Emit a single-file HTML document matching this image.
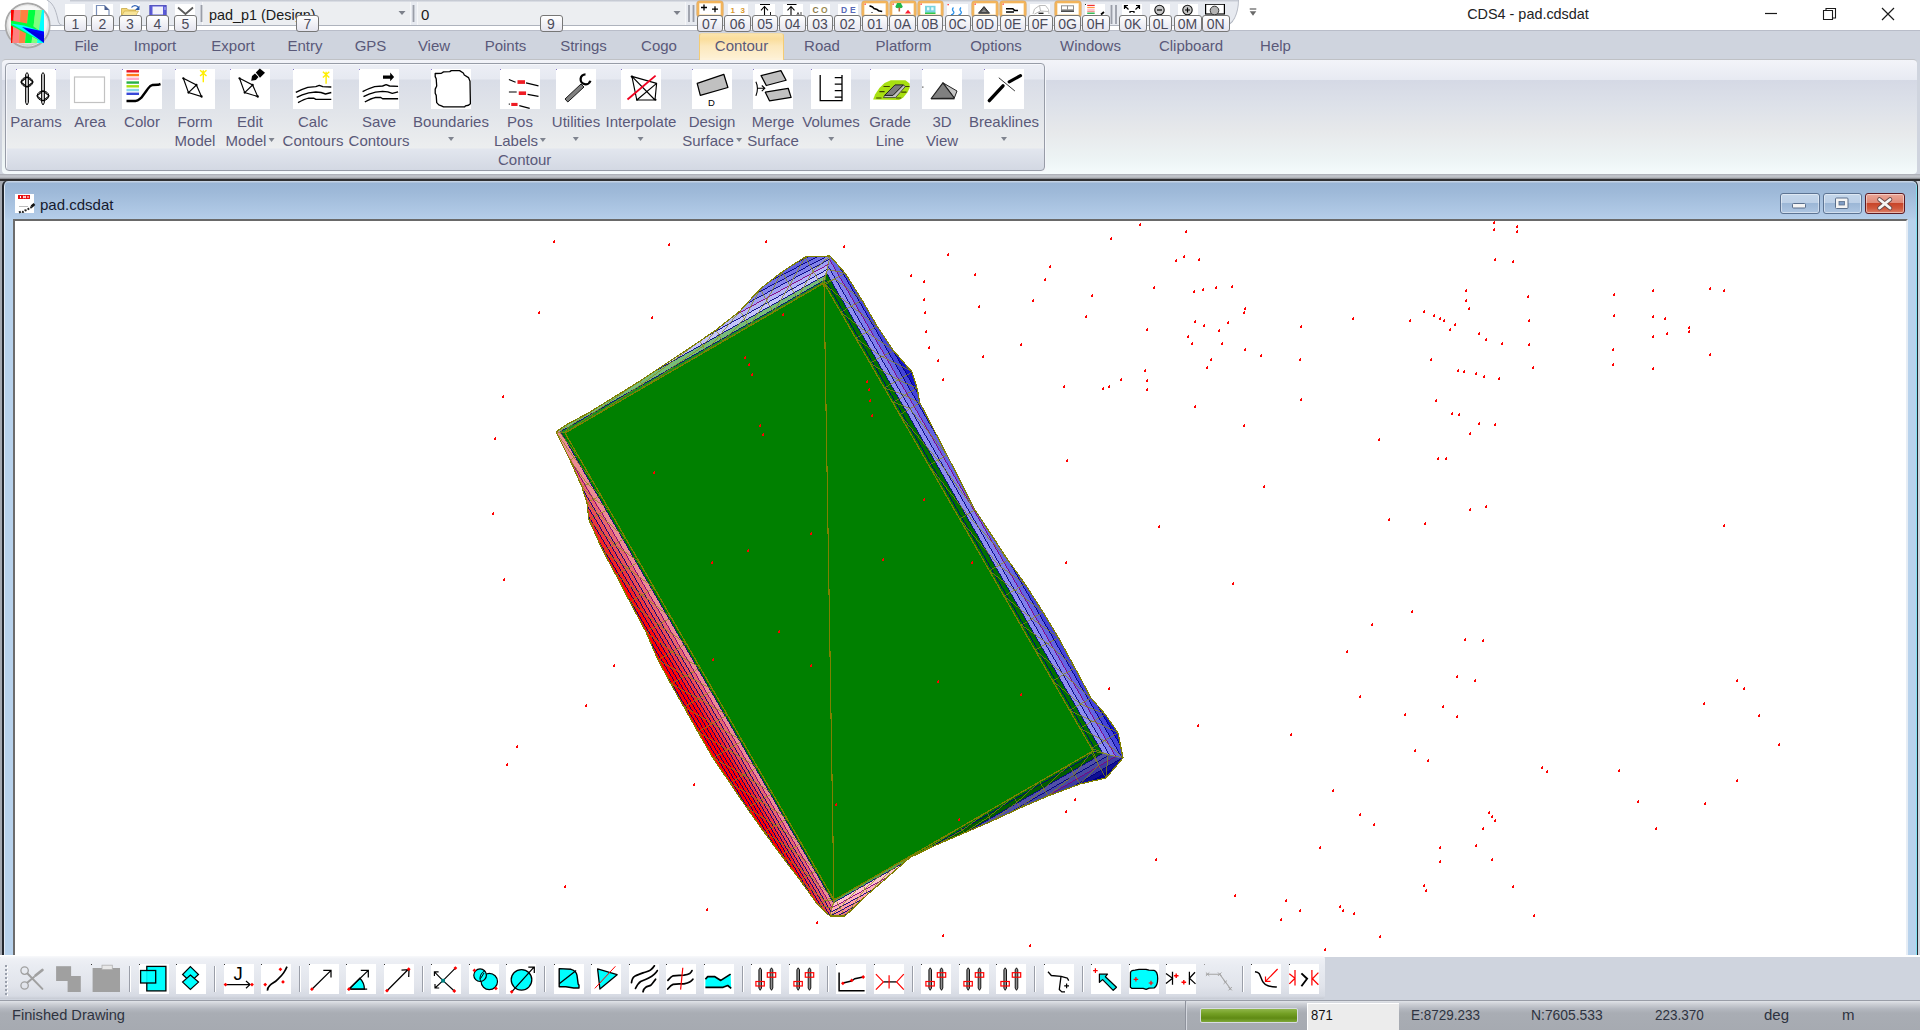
<!DOCTYPE html>
<html><head><meta charset="utf-8"><title>CDS4 - pad.cdsdat</title>
<style>
html,body{margin:0;padding:0}
body{width:1920px;height:1030px;position:relative;overflow:hidden;background:#cfd4de;font-family:"Liberation Sans",sans-serif;font-size:15px;color:#5a5979}
.abs{position:absolute}
svg{position:absolute;overflow:visible}
/* title / qat */
#titlebg{left:0;top:0;width:1920px;height:30px;background:#fff}
#qat{left:48px;top:0;width:1190px;height:25px;background:linear-gradient(#c4c8d2 0,#c9cdd6 1.200px,#e7eaf0 1.800px);border-bottom:1px solid #aeb3bd;border-right:1px solid #b8bcc6;border-radius:0 0 14px 0/0 0 26px 0;}
#tabrow{left:0;top:30px;width:1920px;height:29px;background:linear-gradient(#b9bdc9 0,#b9bdc9 1px,#cfd4de 1.500px)}
.tab{position:absolute;top:36px;height:20px;line-height:20px;font-size:15px;color:#5a5979;white-space:nowrap;transform:translateX(-50%)}
.kt{position:absolute;top:15px;height:15px;line-height:16px;border:1px solid #767676;border-radius:3px;background:linear-gradient(#ffffff,#e4e4ee);color:#4a4a5a;font-size:14px;text-align:center;box-sizing:content-box}
.combo{position:absolute;top:1.500px;height:23.500px;background:#eceef1;line-height:25px;font-size:15px;color:#1a1a1a;white-space:nowrap;overflow:hidden;box-shadow:-1px 0 0 #f6f7f9,1px 0 0 #f6f7f9}
.qi{position:absolute;top:4px;width:22px;height:12px;background:#fff;overflow:hidden}
.qi.on{top:1px;height:15px;background:#fff;box-shadow:0 0 0 2px #f0b060, 0 0 0 3px #c89048;border-radius:2px}
#wtitle{left:1458px;top:3px;width:140px;text-align:center;transform:scaleX(.96);font-size:15px;line-height:22px;color:#222;white-space:nowrap}
/* ribbon */
#ribbon{left:2px;top:58.600px;width:1915px;height:115px;border-radius:4px;box-sizing:border-box;border-top:1px solid #bfc1c5;background:linear-gradient(#f3f4f9 0px,#e7eaf2 20px,#d5d9e5 20px,#dde1e9 45px,#e7e9eb 72px,#edf4f5 100px,#f5fbfc 114px)}
#group{left:5px;top:63px;width:1040px;height:108px;border:1px solid #979ca7;border-radius:4px;box-sizing:border-box;background:linear-gradient(#eceef5 0px,#e6e9f1 15px,#d9dde7 16px,#e2e5ea 50px,#eceeef 84px,#e2e6ee 85px,#d3d8e3 106px);box-shadow:1px 1px 0 #f4f6fa, inset 1px 1px 0 #f6f7fb}
.rb{position:absolute;top:69px;width:40px;height:40px;background:#fff}
.rl{position:absolute;top:112px;line-height:19px;font-size:15px;color:#5a5979;text-align:center;white-space:nowrap;transform:translateX(-50%)}
.dd{position:relative;top:-2px;display:inline-block;width:0;height:0;border:3.5px solid transparent;border-top:4px solid #7f848f;border-bottom:0;vertical-align:middle;margin-left:2px}
#gcap{left:498px;top:150px;line-height:20px;font-size:15px;color:#5a5979}
#rsep1{left:0;top:173.500px;width:1920px;height:5.800px;background:linear-gradient(#a9abb3 0,#c4c7cd 40%,#bcbfc5 65%,#7c7e82 100%)}
#rsep2{left:0;top:179.200px;width:1920px;height:2px;background:#2f2f31}
#mdibg{left:0;top:181.200px;width:1917px;height:773.800px;background:#a4a8b0}
/* mdi */
#mdiframe{left:2px;top:180.200px;width:1915.500px;height:774.800px;border-bottom:none !important;box-sizing:border-box;border:1px solid #2f2f31;border-left:2px solid #23272e;border-right:1.500px solid #23272e;border-radius:6px 6px 0 0;box-shadow:inset 0 1.500px 0 #c4d2e4,inset 1px 0 0 #dfe9f5,inset -1px 0 0 #7fe0f0;background:linear-gradient(#99b4d4 0px,#9fbad9 12px,#b3cce8 36px,#b8d2ec 40px)}
#mdicontent{left:13px;top:219px;width:1894.500px;height:736px;background:#fff;border-left:2px solid #6c6c6c;border-top:2.200px solid #696969;border-right:2.500px solid #e6edf5;border-bottom:none;box-sizing:border-box}
#mditext{left:40px;top:195px;line-height:20px;font-size:15px;color:#15192e;white-space:nowrap}
.mb{position:absolute;top:193px;height:21px;box-sizing:border-box;border:1px solid #5d7493;border-radius:3px;background:linear-gradient(#c4d6ea 0,#bdd0e7 45%,#9cb7d6 50%,#aec6e2 100%);box-shadow:inset 0 0 0 1px rgba(255,255,255,.45)}
/* toolbar */
#tbbg{left:0;top:955px;width:1920px;height:45px;background:linear-gradient(#fff 0,#fff 2px,#cfd4de 2.500px)}
#tb{left:0;top:955.500px;width:1325px;height:43.500px;border-radius:3px 3px 3px 0;background:linear-gradient(#f8f9fb 0,#eef0f5 3px,#e9ecf2 10px,#e1e4eb 30px,#d6dae3 40px,#c4c8d1 43.500px)}
.ti{position:absolute;top:964px;width:30px;height:30px;background:#fff}
.tsep{position:absolute;top:966px;width:1px;height:26px;background:#9a9ea8;box-shadow:1px 0 0 #fff}
/* status */
#status{left:0;top:1000px;width:1920px;height:30px;background:linear-gradient(#9a9ea8 0,#9a9ea8 1px,#e0e3e8 1px,#cdd0d6 4px,#b3b7bf 9px,#a9adb4 13px,#a6aab1 30px)}
.st{position:absolute;top:1005px;line-height:20px;font-size:15px;color:#2e3340;white-space:nowrap;transform-origin:0 50%}
.nm{transform:scaleX(.9)}

</style></head>
<body>
<div class="abs" id="titlebg"></div>
<div class="abs" id="tabrow"></div>
<div class="abs" id="qat"></div>
<svg style="left:40px;top:0" width="30" height="30" viewBox="40 0 30 30"><path d="M46 0 C55 3 56 14 58 22 Q59 25.5 63 25.5 L70 25.5 L70 0Z" fill="#e7eaf0"/><path d="M47 0 C55 4 56.5 14 58.5 22 Q59.5 25.5 63 25.5 L70 25.5" fill="none" stroke="#b4b8c2" stroke-width="1"/></svg>
<div class="combo" style="left:203px;width:207px;padding-left:6px;box-sizing:border-box"><span style="display:inline-block;transform:scaleX(.96);transform-origin:0 50%">pad_p1 (Design)</span></div>
<div class="combo" style="left:418px;width:267px;padding-left:3px;box-sizing:border-box">0</div>
<svg style="left:0;top:0" width="1300" height="30"><path d="M398.500 11h7l-3.500 4zM673.500 11h7l-3.500 4z" fill="#7c808a"/><path d="M201.500 5v17M413.500 5v17M689 5v17M693.500 5v17M1111.500 5v19M1116 5v19" stroke="#9a9ea8" stroke-width="1.800"/><path d="M1249.700 9h6.600" stroke="#6a6a6a" stroke-width="1.300"/><path d="M1249.700 11.300h6.600l-3.300 4.500z" fill="#6a6a6a"/></svg>
<div class="abs" style="left:65px;top:4px;width:20px;height:12px;background:#fff;overflow:hidden"><svg width="20" height="12" viewBox="65 4 20 12" style="left:0;top:0"></svg></div>
<div class="abs" style="left:93px;top:4px;width:19.5px;height:12px;background:#fff;overflow:hidden"><svg width="19.5" height="12" viewBox="93 4 19.5 12" style="left:0;top:0"><path d="M96.500 16V5.500h8l4.500 4.500v6" fill="#fff" stroke="#7a8fb8" stroke-width="1.200"/><path d="M104.500 5.500v4.500h4.500z" fill="#4a5f90"/></svg></div>
<div class="abs" style="left:120px;top:4px;width:20px;height:12px;background:#fff;overflow:hidden"><svg width="20" height="12" viewBox="120 4 20 12" style="left:0;top:0"><path d="M121.500 16V8.500h5.500l1.500 1.500h7V16z" fill="#f4d878" stroke="#c8a848" stroke-width=".8"/><path d="M121.500 16l3-5h14l-3 5z" fill="#f8e498" stroke="#c8a848" stroke-width=".6"/><path d="M131.500 7.500c1.500-2.500 5-2.500 6.500-.5" fill="none" stroke="#3868b8" stroke-width="1.300"/><path d="M139.500 5.500v4.500h-4.500z" fill="#2858a8"/></svg></div>
<div class="abs" style="left:148.5px;top:4px;width:18px;height:12px;background:#fff;overflow:hidden"><svg width="18" height="12" viewBox="148.5 4 18 12" style="left:0;top:0"><rect x="149.300" y="5.300" width="16.400" height="12" fill="#5a5ad8" stroke="#4040b0" stroke-width=".8"/><rect x="152" y="6.500" width="10.500" height="8" fill="#f0f0fa"/><rect x="164" y="7" width="1" height="3" fill="#c0c0f0"/></svg></div>
<div class="abs" style="left:175px;top:4px;width:20px;height:12px;background:#fff;overflow:hidden"><svg width="20" height="12" viewBox="175 4 20 12" style="left:0;top:0"><path d="M178 7.500l7.500 6.500 7.500-6.500" fill="none" stroke="#5a5a5a" stroke-width="1.800"/></svg></div>
<div class="abs" style="left:697px;top:1px;width:26px;height:16px;box-sizing:border-box;border:2.500px solid #f2b45c;border-radius:3px;background:#fff;box-shadow:0 0 0 .6px #d8a868, inset 0 0 0 .8px #fbe2b8;overflow:hidden"><svg width="21" height="14" viewBox="699.5 3.500 21 14" style="left:0;top:0"><path d="M701.500 8h6M704.500 5v6M712.500 9.700h6M715.500 6.700v6" stroke="#000" stroke-width="1.300"/></svg></div>
<div class="abs" style="left:727.5px;top:4px;width:20px;height:12px;background:#fff;overflow:hidden"><svg width="20" height="12" viewBox="727.5 4 20 12" style="left:0;top:0"><text x="730" y="13" font-size="8" fill="#d8982c" font-family="Liberation Sans,sans-serif" font-weight="bold">1</text><text x="740" y="13" font-size="8" fill="#d8982c" font-family="Liberation Sans,sans-serif" font-weight="bold">3</text></svg></div>
<div class="abs" style="left:755px;top:4px;width:20px;height:12px;background:#fff;overflow:hidden"><svg width="20" height="12" viewBox="755 4 20 12" style="left:0;top:0"><path d="M760 4.500h10M764.500 6.500v10M761 10.300l3.500-3.800 3.500 3.800" fill="none" stroke="#000" stroke-width="1.100"/><path d="M770.500 12v4" stroke="#000" stroke-width=".9"/></svg></div>
<div class="abs" style="left:782.5px;top:4px;width:20px;height:12px;background:#fff;overflow:hidden"><svg width="20" height="12" viewBox="782.5 4 20 12" style="left:0;top:0"><path d="M786.500 4.500h9.500M790.500 6.500v10M787 10.300l3.500-3.800 3.500 3.800" fill="none" stroke="#000" stroke-width="1.100"/><path d="M796 16l1.500-3.500 1.500 3.500M800.500 12v4" stroke="#000" stroke-width=".7" fill="none"/></svg></div>
<div class="abs" style="left:810px;top:4px;width:20px;height:12px;background:#fff;overflow:hidden"><svg width="20" height="12" viewBox="810 4 20 12" style="left:0;top:0"><text x="812.500" y="13" font-size="8.500" fill="#8a7a48" font-family="Liberation Sans,sans-serif" font-weight="bold">C</text><text x="821" y="13" font-size="8.500" fill="#9a8a50" font-family="Liberation Sans,sans-serif" font-weight="bold">O</text></svg></div>
<div class="abs" style="left:837.5px;top:4px;width:20px;height:12px;background:#fff;overflow:hidden"><svg width="20" height="12" viewBox="837.5 4 20 12" style="left:0;top:0"><text x="840.500" y="13" font-size="8.500" fill="#5868b8" font-family="Liberation Sans,sans-serif" font-weight="bold">D</text><text x="849.500" y="13" font-size="8.500" fill="#5868b8" font-family="Liberation Sans,sans-serif" font-weight="bold">E</text></svg></div>
<div class="abs" style="left:862px;top:1px;width:26px;height:16px;box-sizing:border-box;border:2.500px solid #f2b45c;border-radius:3px;background:#fff;box-shadow:0 0 0 .6px #d8a868, inset 0 0 0 .8px #fbe2b8;overflow:hidden"><svg width="21" height="14" viewBox="864.5 3.500 21 14" style="left:0;top:0"><rect x="865" y="4" width="1.300" height="1.300" fill="#ff2020"/><path d="M870 6.300l3 1.200 1.500 1.500 3 1 1.500 1.200 3.700.8" fill="none" stroke="#000" stroke-width="1.500"/><rect x="872" y="12.500" width="1" height="1" fill="#000"/></svg></div>
<div class="abs" style="left:890px;top:1px;width:25.5px;height:16px;box-sizing:border-box;border:2.500px solid #f2b45c;border-radius:3px;background:#fff;box-shadow:0 0 0 .6px #d8a868, inset 0 0 0 .8px #fbe2b8;overflow:hidden"><svg width="20.5" height="14" viewBox="892.5 3.500 20.5 14" style="left:0;top:0"><rect x="893" y="4" width="1.300" height="1.300" fill="#ff2020"/><circle cx="899.500" cy="5.700" r="2.700" fill="#20b848"/><circle cx="897.800" cy="7" r="1.800" fill="#20b848"/><circle cx="901.300" cy="7" r="1.800" fill="#20b848"/><rect x="899" y="8" width="1.600" height="4" fill="#b86838"/><path d="M905.500 14l3-3.800 3 3.800z" fill="#ff2030"/></svg></div>
<div class="abs" style="left:917.5px;top:1px;width:25.5px;height:16px;box-sizing:border-box;border:2.500px solid #f2b45c;border-radius:3px;background:#fff;box-shadow:0 0 0 .6px #d8a868, inset 0 0 0 .8px #fbe2b8;overflow:hidden"><svg width="20.5" height="14" viewBox="920 3.500 20.5 14" style="left:0;top:0"><rect x="920.5" y="4" width="1.300" height="1.300" fill="#ff2020"/><rect x="925" y="6.300" width="10.500" height="7" fill="#78d4e0"/><rect x="927" y="7.800" width="2.400" height="3" fill="#e8fafc"/><rect x="931.200" y="7.800" width="2.400" height="3" fill="#e8fafc"/><rect x="925" y="13" width="10.500" height="1.500" fill="#30c848"/></svg></div>
<div class="abs" style="left:947px;top:4px;width:20.5px;height:12px;background:#fff;overflow:hidden"><svg width="20.5" height="12" viewBox="947 4 20.5 12" style="left:0;top:0"><rect x="947.5" y="4" width="1.300" height="1.300" fill="#ff2020"/><path d="M953.500 7.500c-1.500 1.500-1 3 0 4s0 3-2.500 3.500M961 7.500c-1.500 1.500-1 3 0 4s0 3-2.500 3.500" fill="none" stroke="#2c90e8" stroke-width="1.300"/></svg></div>
<div class="abs" style="left:972px;top:1px;width:26px;height:16px;box-sizing:border-box;border:2.500px solid #f2b45c;border-radius:3px;background:#fff;box-shadow:0 0 0 .6px #d8a868, inset 0 0 0 .8px #fbe2b8;overflow:hidden"><svg width="21" height="14" viewBox="974.5 3.500 21 14" style="left:0;top:0"><rect x="975" y="4" width="1.300" height="1.300" fill="#ff2020"/><path d="M979 13.700l5.500-6.600 5.500 6.600z" fill="#585858" stroke="#2a2a2a" stroke-width="1"/><path d="M982 12.500l2.500-3 2.500 3z" fill="#8a8a8a"/></svg></div>
<div class="abs" style="left:1000px;top:1px;width:25.5px;height:16px;box-sizing:border-box;border:2.500px solid #f2b45c;border-radius:3px;background:#fff;box-shadow:0 0 0 .6px #d8a868, inset 0 0 0 .8px #fbe2b8;overflow:hidden"><svg width="20.5" height="14" viewBox="1002.5 3.500 20.5 14" style="left:0;top:0"><rect x="1003" y="4" width="1.300" height="1.300" fill="#ff2020"/><path d="M1006.500 9.200h6.800l1.700 1.700h3.500M1006.500 12.600h8" fill="none" stroke="#000" stroke-width="1.500"/></svg></div>
<div class="abs" style="left:1030px;top:4px;width:20px;height:12px;background:#fff;overflow:hidden"><svg width="20" height="12" viewBox="1030 4 20 12" style="left:0;top:0"><path d="M1033 14l1.500-5 5-3.500h6l3 4 .5 4.500M1039.500 5.500l1 5.500-6 3M1040.500 11l8 .5" fill="none" stroke="#bcbcbc" stroke-width="1"/><rect x="1038.500" y="12.600" width="5" height="1.400" fill="#222"/></svg></div>
<div class="abs" style="left:1054.5px;top:1px;width:26px;height:16px;box-sizing:border-box;border:2.500px solid #f2b45c;border-radius:3px;background:#fff;box-shadow:0 0 0 .6px #d8a868, inset 0 0 0 .8px #fbe2b8;overflow:hidden"><svg width="21" height="14" viewBox="1057 3.500 21 14" style="left:0;top:0"><rect x="1061.500" y="6.300" width="12" height="4" fill="#fff" stroke="#8e8e8e" stroke-width="1"/><path d="M1067.500 6.300v4" stroke="#8e8e8e" stroke-width="1"/><path d="M1061 11.600h13" stroke="#111" stroke-width="1.400"/></svg></div>
<div class="abs" style="left:1085px;top:4px;width:20px;height:12px;background:#fff;overflow:hidden"><svg width="20" height="12" viewBox="1085 4 20 12" style="left:0;top:0"><rect x="1085" y="4" width="1" height="1" fill="#222"/><rect x="1087.200" y="4.800" width="7.500" height="1.300" fill="#f03030"/><rect x="1087.200" y="7" width="7.500" height="1.200" fill="#ff9848"/><rect x="1087.200" y="9.200" width="7.500" height="1.100" fill="#ffb0c8"/><rect x="1087.200" y="10.800" width="7.500" height=".8" fill="#f05050"/><rect x="1087.200" y="12.500" width="7.500" height="1.500" fill="#38b858"/><path d="M1101 14.500l3-2.500" stroke="#000" stroke-width="1.800"/></svg></div>
<div class="abs" style="left:1122px;top:4px;width:20px;height:12px;background:#fff;overflow:hidden"><svg width="20" height="12" viewBox="1122 4 20 12" style="left:0;top:0"><path d="M1124.500 9v-3.500h3.500M1124.500 5.500l4 4M1139.500 9v-3.500h-3.500M1139.500 5.500l-4 4M1130 13v-1.500h4V13" fill="none" stroke="#000" stroke-width="1.200"/></svg></div>
<div class="abs" style="left:1150px;top:4px;width:20px;height:12px;background:#fff;overflow:hidden"><svg width="20" height="12" viewBox="1150 4 20 12" style="left:0;top:0"><circle cx="1159.500" cy="10" r="4.700" fill="#c8c8c8" stroke="#111" stroke-width="1.100"/><path d="M1157 10h5" stroke="#000" stroke-width="1.200"/></svg></div>
<div class="abs" style="left:1177.5px;top:4px;width:20.5px;height:12px;background:#fff;overflow:hidden"><svg width="20.5" height="12" viewBox="1177.5 4 20.5 12" style="left:0;top:0"><circle cx="1187" cy="10" r="4.700" fill="#c8c8c8" stroke="#111" stroke-width="1.100"/><path d="M1184.500 10h5M1187 7.500v5" stroke="#000" stroke-width="1.200"/></svg></div>
<div class="abs" style="left:1205px;top:4px;width:20px;height:12px;background:#fff;overflow:hidden"><svg width="20" height="12" viewBox="1205 4 20 12" style="left:0;top:0"><rect x="1205.600" y="4.200" width="18.800" height="9.800" fill="#fff" stroke="#000" stroke-width="1.200"/><circle cx="1214.500" cy="10.500" r="4.300" fill="#b4b4b4" stroke="#333" stroke-width="1"/></svg></div>
<div class="kt" style="left:64px;width:21px">1</div>
<div class="kt" style="left:91px;width:21px">2</div>
<div class="kt" style="left:118.5px;width:21px">3</div>
<div class="kt" style="left:146px;width:21px">4</div>
<div class="kt" style="left:174px;width:21px">5</div>
<div class="kt" style="left:296px;width:21px">7</div>
<div class="kt" style="left:539.5px;width:21px">9</div>
<div class="kt" style="left:696.5px;width:24.5px">07</div>
<div class="kt" style="left:724.2px;width:24.5px">06</div>
<div class="kt" style="left:751.7px;width:24.5px">05</div>
<div class="kt" style="left:779.2px;width:24.5px">04</div>
<div class="kt" style="left:806.7px;width:24.5px">03</div>
<div class="kt" style="left:834.2px;width:24.5px">02</div>
<div class="kt" style="left:861.7px;width:24.5px">01</div>
<div class="kt" style="left:889.2px;width:24.5px">0A</div>
<div class="kt" style="left:916.7px;width:24.5px">0B</div>
<div class="kt" style="left:944.5px;width:24.5px">0C</div>
<div class="kt" style="left:971.8px;width:24.5px">0D</div>
<div class="kt" style="left:999.5px;width:24.5px">0E</div>
<div class="kt" style="left:1027.5px;width:23px">0F</div>
<div class="kt" style="left:1054px;width:25px">0G</div>
<div class="kt" style="left:1082px;width:25.5px">0H</div>
<div class="kt" style="left:1119px;width:25.5px">0K</div>
<div class="kt" style="left:1149px;width:21px">0L</div>
<div class="kt" style="left:1173.5px;width:26px">0M</div>
<div class="kt" style="left:1202px;width:25.5px">0N</div>
<div class="abs" style="left:699px;top:33px;width:85px;height:26px;box-sizing:border-box;border:1px solid #f4cc74;border-top-color:#f3dca6;border-bottom:none;border-radius:3px 3px 0 0;background:linear-gradient(#fbe4ac 0,#fadd9b 5px,#fce8bc 12px,#fef2d8 26px)"></div>
<div class="tab" style="left:86.5px">File</div>
<div class="tab" style="left:155px">Import</div>
<div class="tab" style="left:233px">Export</div>
<div class="tab" style="left:305px">Entry</div>
<div class="tab" style="left:370.5px">GPS</div>
<div class="tab" style="left:434px">View</div>
<div class="tab" style="left:505.5px">Points</div>
<div class="tab" style="left:583.5px">Strings</div>
<div class="tab" style="left:659px">Cogo</div>
<div class="tab" style="left:741.5px">Contour</div>
<div class="tab" style="left:822px">Road</div>
<div class="tab" style="left:903.5px">Platform</div>
<div class="tab" style="left:996px">Options</div>
<div class="tab" style="left:1090.5px">Windows</div>
<div class="tab" style="left:1191px">Clipboard</div>
<div class="tab" style="left:1275.5px">Help</div>
<svg style="left:0;top:0" width="60" height="60" viewBox="0 0 60 60">
<defs><radialGradient id="og" cx="50%" cy="45%" r="55%"><stop offset="0" stop-color="#fff"/><stop offset=".78" stop-color="#f4f4f4"/><stop offset=".9" stop-color="#c9c9c9"/><stop offset="1" stop-color="#9a9a9a"/></radialGradient>
<clipPath id="oc"><rect x="11" y="10" width="33" height="33"/></clipPath></defs>
<circle cx="27.700" cy="25.500" r="22" fill="url(#og)" stroke="#a9a9a9" stroke-width="1.800"/><circle cx="27.700" cy="25.500" r="20.600" fill="none" stroke="#e4e4e4" stroke-width="1"/>
<g clip-path="url(#oc)">
<rect x="11" y="10" width="33" height="33" fill="#80ff80"/>
<path d="M11 10h3l-1.5 33H11z" fill="#ff0000"/>
<path d="M14 10h6.5l-1.5 33h-6.5z" fill="#ff8080"/>
<path d="M20.5 10h8l-3.5 33h-6z" fill="#ff8040"/>
<path d="M28.5 10h7l-4 33h-6.5z" fill="#00ff40"/>
<path d="M35.500 10H42L37 43h-5.500z" fill="#80ff80"/>
<path d="M42 10h2v33h-7z" fill="#00ffff"/>
<path d="M11 20.500L30 24 44 34v9L11 25.500z" fill="#00ff40"/>
<path d="M11 23.500L44 43V32L24 25.500z" fill="#00ffff"/>
<path d="M22 27L44 31.500V43z" fill="#0000ff"/>
<path d="M25 29L44 35V42z" fill="#0000e0"/>
</g></svg>
<div class="abs" id="wtitle">CDS4 - pad.cdsdat</div>
<svg style="left:1750px;top:0" width="170" height="30" viewBox="1750 0 170 30"><path d="M1765 13.5h12" stroke="#1a1a1a" stroke-width="1.2" fill="none"/><path d="M1823.500 10.500h9v9h-9zM1826 10.500v-2h9.500v9.500h-3" stroke="#1a1a1a" stroke-width="1.1" fill="none"/><path d="M1882 8l12 12M1894 8l-12 12" stroke="#1a1a1a" stroke-width="1.2" fill="none"/></svg>
<div class="abs" id="ribbon"></div>
<div class="abs" style="left:699px;top:58px;width:85px;height:1.800px;background:#fef2d8;border-left:1px solid #f4cc74;border-right:1px solid #f4cc74;box-sizing:border-box"></div>
<div class="abs" id="group"></div>
<div class="rb" style="left:16px"><svg width="40" height="40" viewBox="0 0 40 40" style="left:0;top:0"><rect x="0" y="0" width="1" height="1" fill="#8878c8"/><rect x="39" y="0" width="1" height="1" fill="#8878c8"/><path d="M9.5 5.500l1.500-2 1.500 2v28l-1.500 2.500-1.500-2.500z" fill="#b8b8b8" stroke="#000" stroke-width=".9"/><path d="M11 3.500v32" stroke="#000" stroke-width=".01"/><path d="M5 13l6-5 6 5-6 5z" fill="none" stroke="#000" stroke-width="1.100" stroke-linejoin="round"/><ellipse cx="11" cy="13" rx="5.800" ry="4.800" fill="none" stroke="#000" stroke-width="1"/><path d="M25.5 5.500l1.500-2 1.500 2v28l-1.500 2.500-1.500-2.500z" fill="#b8b8b8" stroke="#000" stroke-width=".9"/><path d="M27 3.500v32" stroke="#000" stroke-width=".01"/><path d="M21 26.8l6-5 6 5-6 5z" fill="none" stroke="#000" stroke-width="1.100" stroke-linejoin="round"/><ellipse cx="27" cy="26.8" rx="5.800" ry="4.800" fill="none" stroke="#000" stroke-width="1"/></svg></div>
<div class="rl" style="left:36px">Params</div>
<div class="rb" style="left:70px"><svg width="40" height="40" viewBox="0 0 40 40" style="left:0;top:0"><rect x="4.500" y="8" width="30" height="25.500" fill="#fff" stroke="#c2c2c2" stroke-width="1.200"/></svg></div>
<div class="rl" style="left:90px">Area</div>
<div class="rb" style="left:122px"><svg width="40" height="40" viewBox="0 0 40 40" style="left:0;top:0"><rect x="0" y="0" width="1" height="1" fill="#8878c8"/><rect x="4.500" y="1.1" width="12.500" height="2.400" fill="#e81828"/><rect x="4.500" y="4.85" width="12.500" height="2.400" fill="#ff7a18"/><rect x="4.500" y="8.6" width="12.500" height="2.400" fill="#ffa8c8"/><rect x="4.500" y="12.35" width="12.500" height="2.400" fill="#28b048"/><rect x="4.500" y="16.1" width="12.500" height="2.400" fill="#a8e010"/><rect x="4.500" y="19.85" width="12.500" height="2.400" fill="#88d8e8"/><rect x="4.500" y="23.6" width="12.500" height="2.400" fill="#3848d8"/><path d="M4.500 32H13.500c3 0 3.500-1.500 6-3.500l5.500-7.500c2.500-3.500 3-4.800 5.500-5l5.500-.2 2.500-.8" fill="none" stroke="#000" stroke-width="2.400" stroke-linejoin="round"/></svg></div>
<div class="rl" style="left:142px">Color</div>
<div class="rb" style="left:175px"><svg width="40" height="40" viewBox="0 0 40 40" style="left:0;top:0"><rect x="0" y="0" width="1" height="1" fill="#8878c8"/><path d="M8.3 9.3L21.4 16L26.5 27.5L13.5 23.6L8.3 9.3M21.4 16L13.5 23.6M8.3 9.3L13.5 23.6" fill="none" stroke="#000" stroke-width="1.150"/><circle cx="8.3" cy="9.3" r="1.150" fill="#000"/><circle cx="21.4" cy="16" r="1.150" fill="#000"/><circle cx="13.5" cy="23.6" r="1.150" fill="#000"/><circle cx="26.5" cy="27.5" r="1.150" fill="#000"/><path d="M28.3 1.3v12M25.1 1.3l6.400 5.700M31.5 1.3l-6.400 5.700" stroke="#ffee00" stroke-width="1.400" fill="none"/></svg></div>
<div class="rl" style="left:195px">Form<br>Model</div>
<div class="rb" style="left:230px"><svg width="40" height="40" viewBox="0 0 40 40" style="left:0;top:0"><rect x="0" y="0" width="1" height="1" fill="#8878c8"/><path d="M9.5 9.3L22.6 16L27.7 27.5L14.7 23.6L9.5 9.3M22.6 16L14.7 23.6M9.5 9.3L14.7 23.6" fill="none" stroke="#000" stroke-width="1.150"/><circle cx="9.5" cy="9.3" r="1.150" fill="#000"/><circle cx="22.6" cy="16" r="1.150" fill="#000"/><circle cx="14.7" cy="23.6" r="1.150" fill="#000"/><circle cx="27.7" cy="27.5" r="1.150" fill="#000"/><path d="M21.200 11.700l.8-4.700 3-2.600 3.500 3.500-2.600 3z" fill="#000"/><path d="M25.800 3.500l4-4 5.200 4.200-5 5z" fill="#000"/></svg></div>
<div class="rl" style="left:250px">Edit<br>Model<span class="dd"></span></div>
<div class="rb" style="left:293px"><svg width="40" height="40" viewBox="0 0 40 40" style="left:0;top:0"><rect x="0" y="0" width="1" height="1" fill="#8878c8"/><path d="M2.800 23.300C7 21 11 19.500 14.800 18.300l8-.6 3.500-1.300 3.500 1.300 8.500.3M3.700 28.300C8 26 12 24.800 15.700 23.900l7.100-.9 5.200.5 4.500 1.500 5.800-1.500M5 33.700C9 31.500 12 30 15.700 29.200h5.300l1.800 1.200h15.500" fill="none" stroke="#000" stroke-width="1.350" stroke-linejoin="round"/><path d="M33.1 2.7v12M29.9 2.7l6.400 5.700M36.3 2.7l-6.400 5.700" stroke="#ffee00" stroke-width="1.400" fill="none"/></svg></div>
<div class="rl" style="left:313px">Calc<br>Contours</div>
<div class="rb" style="left:359px"><svg width="40" height="40" viewBox="0 0 40 40" style="left:0;top:0"><rect x="0" y="0" width="1" height="1" fill="#8878c8"/><g transform="translate(.8,-.7)"><path d="M2.800 23.300C7 21 11 19.500 14.800 18.300l8-.6 3.500-1.300 3.500 1.300 8.500.3M3.700 28.300C8 26 12 24.800 15.700 23.900l7.100-.9 5.200.5 4.500 1.500 5.800-1.500M5 33.700C9 31.500 12 30 15.700 29.200h5.300l1.800 1.200h15.500" fill="none" stroke="#000" stroke-width="1.350" stroke-linejoin="round"/></g><path d="M24 6.400h7.200V3.600l3.900 4.400-3.900 4.300V9.700H24z" fill="#000"/></svg></div>
<div class="rl" style="left:379px">Save<br>Contours</div>
<div class="rb" style="left:431px"><svg width="40" height="40" viewBox="0 0 40 40" style="left:0;top:0"><rect x="0" y="0" width="1" height="1" fill="#8878c8"/><polygon points="4.2,4.5 10.4,4.3 12.5,2.9 18.75,2.6 20.3,1.6 28.6,1.6 32.3,4 33.3,6 37.5,8.6 39,12.3 39.4,34.7 37.5,36.25 34.4,36.8 33.9,37.8 12.5,37.8 10.4,36.8 7.8,35.9 5.7,33.6 5.2,26.4 4.2,24.3 4.2,20.1 5.7,17 5.2,9.7 4.2,7.6" fill="#fff" stroke="#000" stroke-width="1.300" stroke-linejoin="round"/></svg></div>
<div class="rl" style="left:451px">Boundaries<br><span class="dd" style="margin:0;position:relative;top:-3px"></span></div>
<div class="rb" style="left:500px"><svg width="40" height="40" viewBox="0 0 40 40" style="left:0;top:0"><rect x="0" y="0" width="1" height="1" fill="#8878c8"/><path d="M8.900 10.500l6.700 2.800M26 13.900l12.500 2.900M8.900 23h7.800M27.600 25.300l10.900 2.100M19.300 36.600l10.400 2.800M8.800 35.200h1" stroke="#000" stroke-width="1.200" fill="none"/><rect x="17.500" y="11.200" width="7.500" height="3.700" fill="#ee1c24"/><rect x="18.750" y="22.400" width="7.300" height="3.600" fill="#ee1c24"/><rect x="11.250" y="33.900" width="6.300" height="3.100" fill="#ee1c24"/></svg></div>
<div class="rl" style="left:520px">Pos<br>Labels<span class="dd"></span></div>
<div class="rb" style="left:556px"><svg width="40" height="40" viewBox="0 0 40 40" style="left:0;top:0"><rect x="0" y="0" width="1" height="1" fill="#8878c8"/><path d="M9 30l2.800 3L28 18l-3-3z" fill="#808080" stroke="#1a1a1a" stroke-width="1"/><path d="M29.500 5.300A5 5 0 1 0 34.400 11.700" fill="none" stroke="#000" stroke-width="2.300"/></svg></div>
<div class="rl" style="left:576px">Utilities<br><span class="dd" style="margin:0;position:relative;top:-3px"></span></div>
<div class="rb" style="left:621px"><svg width="40" height="40" viewBox="0 0 40 40" style="left:0;top:0"><rect x="0" y="0" width="1" height="1" fill="#8878c8"/><path d="M10.900 7.400L35.600 14.400 34 31H15.800zM10.900 7.400L34 31M15.800 31L35.600 14.400" fill="none" stroke="#000" stroke-width="1.150" stroke-linejoin="round"/><circle cx="10.900" cy="7.600" r="1.200"/><circle cx="34.500" cy="30.800" r="1"/><circle cx="16" cy="30.800" r="1"/><path d="M6.500 30.500L34.600 6.600" stroke="#f00020" stroke-width="1.900"/></svg></div>
<div class="rl" style="left:641px">Interpolate<br><span class="dd" style="margin:0;position:relative;top:-3px"></span></div>
<div class="rb" style="left:692px"><svg width="40" height="40" viewBox="0 0 40 40" style="left:0;top:0"><rect x="0" y="0" width="1" height="1" fill="#8878c8"/><path d="M5.200 14.400L31.800 5.300 35.900 18.500 8.300 26.400z" fill="#c0c0c0" stroke="#000" stroke-width="1.250" stroke-linejoin="round"/><text x="16" y="37" font-family="Liberation Sans,sans-serif" font-size="9.500" fill="#000">D</text></svg></div>
<div class="rl" style="left:712px">Design<br>Surface<span class="dd"></span></div>
<div class="rb" style="left:753px"><svg width="40" height="40" viewBox="0 0 40 40" style="left:0;top:0"><rect x="0" y="0" width="1" height="1" fill="#8878c8"/><path d="M8.100 6.600L27.900 1.600 33.100 11.250 13.300 16.500zM12.300 23.200L35.200 19.300 38.100 28.400 16.500 31.800z" fill="#c0c0c0" stroke="#000" stroke-width="1.250" stroke-linejoin="round"/><path d="M2.900 12.800Q6 19.300 2.900 26.900M4.800 19.300h7M8.800 16.500l3 2.800-3 2.800" fill="none" stroke="#000" stroke-width="1.100"/></svg></div>
<div class="rl" style="left:773px">Merge<br>Surface</div>
<div class="rb" style="left:811px"><svg width="40" height="40" viewBox="0 0 40 40" style="left:0;top:0"><rect x="0" y="0" width="1" height="1" fill="#8878c8"/><path d="M9.200 6v25.600H31V6M23.750 8.600H31M23.750 15.100H31M23.750 21.700H31M23.750 28.200H31" fill="none" stroke="#000" stroke-width="1.300"/></svg></div>
<div class="rl" style="left:831px">Volumes<br><span class="dd" style="margin:0;position:relative;top:-3px"></span></div>
<div class="rb" style="left:870px"><svg width="40" height="40" viewBox="0 0 40 40" style="left:0;top:0"><rect x="0" y="0" width="1" height="1" fill="#8878c8"/><path d="M3.100 30.500l2.100-5.200 4.200-6.300 5.200-5.100 6.200-2.650h14.600l4.200 3.150v4.600l-2.100 4.200-4.200 5.200-4.100 2.600z" fill="#a8e010"/><path d="M13.500 17.500h6.300M9.400 22.700h5.200M6.200 29h5.300M34.400 17.500h5.200M31.200 23.200h5.300M26 29h5.300" stroke="#3c4400" stroke-width="1.200"/><path d="M22.900 26.400L33.300 15.900l2.100 1.600-9.900 11.100h-12l1.100-2.200z" fill="#c4c4c4" stroke="#333" stroke-width=".8"/><path d="M14.600 26.400L25 15.900h8.300L22.900 26.400z" fill="#7c7c7c" stroke="#222" stroke-width="1"/></svg></div>
<div class="rl" style="left:890px">Grade<br>Line</div>
<div class="rb" style="left:922px"><svg width="40" height="40" viewBox="0 0 40 40" style="left:0;top:0"><rect x="0" y="0" width="1" height="1" fill="#8878c8"/><rect x="0" y="17.500" width="1.500" height="1.200" fill="#666"/><path d="M20.900 13.800L35 22l-2.700 7z" fill="#c4c4c4" stroke="#222" stroke-width="1"/><path d="M9.200 29.500L20.900 13.800 32.300 29z" fill="#808080" stroke="#222" stroke-width="1.200" stroke-linejoin="round"/><path d="M9 29.700h23.500" stroke="#222" stroke-width="1.400"/></svg></div>
<div class="rl" style="left:942px">3D<br>View</div>
<div class="rb" style="left:984px"><svg width="40" height="40" viewBox="0 0 40 40" style="left:0;top:0"><rect x="0" y="0" width="1" height="1" fill="#8878c8"/><path d="M5.300 31.600L19 16.800" stroke="#000" stroke-width="3.400" stroke-linecap="round"/><path d="M25.200 12.800L36.500 6.700" stroke="#000" stroke-width="3.200" stroke-linecap="round"/><path d="M14.800 8.750L30.900 22" stroke="#000" stroke-width=".8"/></svg></div>
<div class="rl" style="left:1004px">Breaklines<br><span class="dd" style="margin:0;position:relative;top:-3px"></span></div>
<div class="abs" id="gcap">Contour</div>
<div class="abs" id="rsep1"></div><div class="abs" id="rsep2"></div><div class="abs" id="mdibg"></div>
<div class="abs" id="mdiframe"></div>
<div class="abs" id="mdicontent"></div>
<svg style="left:15px;top:194px" width="22" height="20" viewBox="0 0 22 20"><rect x="0" y="0" width="19" height="19" fill="#fff"/><rect x="3" y="1" width="12" height="4" fill="#e81010"/><path d="M5.500 2v2M8 2l3 2M11 2l-3 2M13 2v2" stroke="#fff" stroke-width="1"/><path d="M4 12.500h9" stroke="#bbb" stroke-width="1"/><path d="M4 18.500l2-1 2 .5 2-1.500 2-.5 2-1.500 2-1 2-2" stroke="#222" stroke-width="2" stroke-dasharray="2 1.200" fill="none"/><path d="M16.500 12.500l3 -2.500" stroke="#111" stroke-width="2.600"/></svg>
<div class="abs" id="mditext">pad.cdsdat</div>
<div class="mb" style="left:1780px;width:40px"></div><div class="mb" style="left:1823px;width:39px"></div>
<div class="mb" style="left:1865px;width:40px;border-color:#5e1a22;background:linear-gradient(#eba697 0,#df8a78 45%,#c8452a 50%,#d0583c 75%,#dc826c 100%)"></div>
<svg style="left:1780px;top:193px" width="126" height="22" viewBox="1780 193 126 22"><rect x="1792.500" y="203.500" width="13" height="4.500" rx="1" fill="#f4f4f4" stroke="#5a6f8c" stroke-width="1"/><rect x="1835.500" y="198" width="12.500" height="10.500" rx="1" fill="#f4f4f4" stroke="#5a6f8c" stroke-width="1"/><rect x="1839" y="201.500" width="5.500" height="3.500" fill="#7f9cc4" stroke="#5a6f8c" stroke-width=".8"/><path d="M1879.500 199.500l10.500 8.500M1890 199.500l-10.500 8.500" stroke="#6a4a4a" stroke-width="4.600" stroke-linecap="round"/><path d="M1879.500 199.500l10.500 8.500M1890 199.500l-10.500 8.500" stroke="#f6f6f6" stroke-width="2.800" stroke-linecap="round"/></svg>
<svg style="left:0;top:0" width="1920" height="1030" viewBox="0 0 1920 1030" shape-rendering="crispEdges">
<defs><clipPath id="cpo"><polygon points="556.0,432.0 566.0,425.0 590.0,412.0 640.0,381.0 700.0,341.0 716.0,330.0 740.0,311.0 760.0,289.0 782.0,272.0 805.0,257.0 830.0,256.0 845.0,273.0 862.0,300.0 877.0,326.0 893.0,350.0 912.0,372.0 917.0,388.0 920.0,403.0 947.0,455.0 975.0,510.0 1008.0,560.0 1025.0,584.0 1043.0,612.0 1058.0,637.0 1075.0,668.0 1091.0,698.0 1105.0,714.0 1118.0,733.0 1123.0,758.0 1106.0,778.0 1080.0,784.0 1048.0,796.0 1020.0,808.0 992.0,821.0 964.0,833.0 936.0,845.0 910.0,857.5 890.0,875.0 868.0,894.0 845.0,916.0 830.0,916.0 818.0,905.0 800.0,880.0 781.0,855.0 764.0,832.0 747.0,808.0 730.0,783.0 713.0,758.0 698.0,732.0 684.0,707.0 671.0,684.0 658.0,660.0 646.0,632.0 630.0,602.0 616.0,575.0 603.0,551.0 589.0,520.0 587.0,503.0 582.0,487.0 570.0,460.0"/></clipPath>
<clipPath id="cw0"><polygon points="565.0,433.0 483.1,411.1 846.0,200.9 824.0,283.0"/></clipPath>
<clipPath id="cw1"><polygon points="824.0,283.0 846.0,200.9 1174.9,773.1 1093.0,751.0"/></clipPath>
<clipPath id="cw2"><polygon points="1093.0,751.0 1174.9,773.1 939.3,908.6 909.4,856.6"/></clipPath>
<clipPath id="cw3"><polygon points="909.4,856.6 939.3,908.6 811.9,981.9 834.0,900.0"/></clipPath>
<clipPath id="cw4"><polygon points="834.0,900.0 811.9,981.9 483.1,411.1 565.0,433.0"/></clipPath>
</defs>
<g clip-path="url(#cpo)">
<polygon points="556.0,432.0 566.0,425.0 590.0,412.0 640.0,381.0 700.0,341.0 716.0,330.0 740.0,311.0 760.0,289.0 782.0,272.0 805.0,257.0 830.0,256.0 845.0,273.0 862.0,300.0 877.0,326.0 893.0,350.0 912.0,372.0 917.0,388.0 920.0,403.0 947.0,455.0 975.0,510.0 1008.0,560.0 1025.0,584.0 1043.0,612.0 1058.0,637.0 1075.0,668.0 1091.0,698.0 1105.0,714.0 1118.0,733.0 1123.0,758.0 1106.0,778.0 1080.0,784.0 1048.0,796.0 1020.0,808.0 992.0,821.0 964.0,833.0 936.0,845.0 910.0,857.5 890.0,875.0 868.0,894.0 845.0,916.0 830.0,916.0 818.0,905.0 800.0,880.0 781.0,855.0 764.0,832.0 747.0,808.0 730.0,783.0 713.0,758.0 698.0,732.0 684.0,707.0 671.0,684.0 658.0,660.0 646.0,632.0 630.0,602.0 616.0,575.0 603.0,551.0 589.0,520.0 587.0,503.0 582.0,487.0 570.0,460.0" fill="#7070e0"/>
<g clip-path="url(#cw0)">
<polygon points="495.9,473.4 893.4,243.2 892.1,241.0 493.8,469.6" fill="#1c901c"/>
<polygon points="494.1,470.2 892.4,241.6 890.4,238.1 490.3,463.7" fill="#78bc78"/>
<polygon points="490.6,464.2 890.7,238.6 888.7,235.1 486.9,457.8" fill="#c4c4fa"/>
<polygon points="487.2,458.3 889.0,235.6 887.0,232.1 483.5,451.9" fill="#b4b4f6"/>
<polygon points="483.8,452.4 887.3,232.6 885.2,229.1 480.1,446.0" fill="#a0a0f2"/>
<polygon points="480.4,446.5 885.5,229.6 883.5,226.1 476.7,440.1" fill="#8484ea"/>
<polygon points="477.0,440.6 883.8,226.7 881.8,223.2 473.2,434.2" fill="#7070e4"/>
<polygon points="473.5,434.7 882.1,223.7 880.1,220.2 469.8,428.3" fill="#6060dc"/>
<polygon points="470.1,428.8 880.4,220.7 878.3,217.2 466.4,422.3" fill="#5858d8"/>
<polygon points="466.7,422.9 878.6,217.7 876.5,214.1 462.8,416.2" fill="#5050d8"/>
<path d="M493.9 469.9L892.3 241.3" stroke="#000080" stroke-width="0.9" fill="none"/>
<path d="M490.5 464.0L890.6 238.3" stroke="#000080" stroke-width="0.9" fill="none"/>
<path d="M487.1 458.1L888.8 235.3" stroke="#000080" stroke-width="0.9" fill="none"/>
<path d="M483.6 452.2L887.1 232.4" stroke="#800080" stroke-width="0.9" fill="none"/>
<path d="M480.2 446.2L885.4 229.4" stroke="#000080" stroke-width="0.9" fill="none"/>
<path d="M476.8 440.3L883.7 226.4" stroke="#000080" stroke-width="0.9" fill="none"/>
<path d="M473.4 434.4L881.9 223.4" stroke="#000080" stroke-width="0.9" fill="none"/>
<path d="M470.0 428.5L880.2 220.4" stroke="#000080" stroke-width="0.9" fill="none"/>
<path d="M466.5 422.6L878.5 217.5" stroke="#000080" stroke-width="0.9" fill="none"/>
</g>
<g clip-path="url(#cw1)">
<polygon points="783.9,213.8 1132.6,820.5 1135.4,818.9 786.6,212.2" fill="#008000"/>
<polygon points="786.1,212.5 1134.9,819.2 1139.6,816.5 790.7,209.9" fill="#007000"/>
<polygon points="790.1,210.2 1139.0,816.8 1143.7,814.1 794.7,207.6" fill="#9090f0"/>
<polygon points="794.2,207.9 1143.2,814.4 1147.9,811.7 798.8,205.2" fill="#8080ec"/>
<polygon points="798.3,205.5 1147.4,812.0 1152.1,809.3 802.9,202.9" fill="#6464e2"/>
<polygon points="802.3,203.2 1151.6,809.6 1156.3,806.9 806.9,200.5" fill="#4444d8"/>
<polygon points="806.4,200.8 1155.7,807.2 1160.4,804.5 811.0,198.2" fill="#1414c8"/>
<polygon points="810.5,198.5 1159.9,804.8 1164.6,802.1 815.1,195.9" fill="#0000b8"/>
<polygon points="814.5,196.2 1164.1,802.4 1168.8,799.7 819.1,193.5" fill="#0000a8"/>
<polygon points="818.6,193.8 1168.3,800.0 1173.1,797.2 823.4,191.1" fill="#0000a0"/>
<path d="M786.3 212.4L1135.1 819.1" stroke="#000080" stroke-width="0.9" fill="none"/>
<path d="M790.4 210.0L1139.3 816.7" stroke="#000080" stroke-width="0.9" fill="none"/>
<path d="M794.5 207.7L1143.5 814.3" stroke="#000080" stroke-width="0.9" fill="none"/>
<path d="M798.5 205.4L1147.6 811.9" stroke="#800080" stroke-width="0.9" fill="none"/>
<path d="M802.6 203.0L1151.8 809.5" stroke="#000080" stroke-width="0.9" fill="none"/>
<path d="M806.7 200.7L1156.0 807.1" stroke="#000080" stroke-width="0.9" fill="none"/>
<path d="M810.7 198.4L1160.2 804.7" stroke="#000080" stroke-width="0.9" fill="none"/>
<path d="M814.8 196.0L1164.3 802.3" stroke="#000080" stroke-width="0.9" fill="none"/>
<path d="M818.9 193.7L1168.5 799.9" stroke="#000080" stroke-width="0.9" fill="none"/>
</g>
<g clip-path="url(#cw2)">
<polygon points="1162.2,710.8 839.9,896.3 841.5,899.1 1163.7,713.5" fill="#007800"/>
<polygon points="1163.4,712.9 841.2,898.6 843.9,903.3 1165.9,717.3" fill="#005c00"/>
<polygon points="1165.6,716.8 843.6,902.8 846.4,907.6 1168.2,721.2" fill="#5050a8"/>
<polygon points="1167.9,720.7 846.1,907.0 848.8,911.8 1170.4,725.1" fill="#4848a4"/>
<polygon points="1170.1,724.6 848.5,911.3 851.3,916.0 1172.6,729.0" fill="#3c3ca0"/>
<polygon points="1172.3,728.4 851.0,915.5 853.7,920.3 1174.8,732.8" fill="#101094"/>
<polygon points="1174.5,732.3 853.4,919.8 856.1,924.5 1177.1,736.7" fill="#000090"/>
<polygon points="1176.8,736.2 855.8,924.0 858.6,928.8 1179.3,740.6" fill="#000088"/>
<polygon points="1179.0,740.1 858.3,928.2 861.0,933.0 1181.5,744.5" fill="#000088"/>
<polygon points="1181.2,743.9 860.7,932.5 863.5,937.4 1183.9,748.5" fill="#000088"/>
<path d="M1163.6 713.2L841.3 898.8" stroke="#000080" stroke-width="0.9" fill="none"/>
<path d="M1165.8 717.1L843.8 903.1" stroke="#000080" stroke-width="0.9" fill="none"/>
<path d="M1168.0 721.0L846.2 907.3" stroke="#000080" stroke-width="0.9" fill="none"/>
<path d="M1170.2 724.8L848.7 911.5" stroke="#800080" stroke-width="0.9" fill="none"/>
<path d="M1172.5 728.7L851.1 915.8" stroke="#000080" stroke-width="0.9" fill="none"/>
<path d="M1174.7 732.6L853.5 920.0" stroke="#000080" stroke-width="0.9" fill="none"/>
<path d="M1176.9 736.4L856.0 924.3" stroke="#000080" stroke-width="0.9" fill="none"/>
<path d="M1179.2 740.3L858.4 928.5" stroke="#000080" stroke-width="0.9" fill="none"/>
<path d="M1181.4 744.2L860.9 932.7" stroke="#000080" stroke-width="0.9" fill="none"/>
</g>
<g clip-path="url(#cw3)">
<polygon points="978.6,816.5 764.5,939.6 765.6,941.5 980.4,819.7" fill="#50a850"/>
<polygon points="980.1,819.2 765.3,941.0 767.1,944.1 983.2,824.6" fill="#ffc4cc"/>
<polygon points="982.9,824.1 766.8,943.6 768.3,946.3 985.7,828.8" fill="#ffb0b8"/>
<polygon points="985.4,828.3 768.0,945.8 769.6,948.4 988.0,832.9" fill="#ff9ca6"/>
<polygon points="987.7,832.4 769.3,947.9 770.8,950.5 990.3,836.9" fill="#f88c94"/>
<polygon points="990.0,836.4 770.5,950.0 771.9,952.5 992.6,840.8" fill="#f07880"/>
<polygon points="992.3,840.3 771.6,952.0 773.1,954.6 994.8,844.7" fill="#f06068"/>
<polygon points="994.5,844.2 772.8,954.0 774.3,956.6 997.0,848.6" fill="#f06068"/>
<polygon points="996.7,848.1 774.0,956.1 775.4,958.6 999.3,852.5" fill="#f06068"/>
<polygon points="999.0,852.0 775.1,958.1 777.1,961.5 1002.5,858.1" fill="#f06068"/>
<path d="M980.2 819.4L765.5 941.3" stroke="#000080" stroke-width="0.9" fill="none"/>
<path d="M983.1 824.3L766.9 943.8" stroke="#800080" stroke-width="0.9" fill="none"/>
<path d="M985.5 828.6L768.2 946.0" stroke="#000080" stroke-width="0.9" fill="none"/>
<path d="M987.9 832.7L769.4 948.2" stroke="#000080" stroke-width="0.9" fill="none"/>
<path d="M990.2 836.7L770.6 950.3" stroke="#000080" stroke-width="0.9" fill="none"/>
<path d="M992.4 840.6L771.8 952.3" stroke="#000080" stroke-width="0.9" fill="none"/>
<path d="M994.7 844.5L772.9 954.3" stroke="#000080" stroke-width="0.9" fill="none"/>
<path d="M996.9 848.4L774.1 956.3" stroke="#000080" stroke-width="0.9" fill="none"/>
<path d="M999.1 852.3L775.3 958.4" stroke="#000080" stroke-width="0.9" fill="none"/>
</g>
<g clip-path="url(#cw4)">
<polygon points="874.2,969.2 525.3,363.5 522.1,365.4 872.1,970.4" fill="#008000"/>
<polygon points="872.7,970.1 522.6,365.1 517.0,368.3 869.3,972.0" fill="#ec8c94"/>
<polygon points="869.8,971.7 517.6,368.0 512.7,370.8 866.9,973.4" fill="#e8666e"/>
<polygon points="867.4,973.1 513.3,370.5 508.5,373.2 864.5,974.7" fill="#ea4e56"/>
<polygon points="865.1,974.4 509.1,372.9 504.5,375.6 862.3,976.0" fill="#ee363e"/>
<polygon points="862.8,975.7 505.0,375.3 500.5,377.8 860.0,977.3" fill="#f42222"/>
<polygon points="860.5,977.0 501.0,377.5 496.5,380.1 857.8,978.6" fill="#ff0808"/>
<polygon points="858.3,978.3 497.0,379.8 492.5,382.4 855.5,979.9" fill="#ff0000"/>
<polygon points="856.1,979.6 493.0,382.1 488.5,384.7 853.3,981.2" fill="#ff0000"/>
<polygon points="853.8,980.9 489.0,384.4 482.8,388.0 850.1,983.0" fill="#ff0000"/>
<path d="M872.4 970.2L522.3 365.2" stroke="#000080" stroke-width="0.9" fill="none"/>
<path d="M869.6 971.8L517.3 368.2" stroke="#800080" stroke-width="0.9" fill="none"/>
<path d="M867.2 973.2L513.0 370.6" stroke="#000080" stroke-width="0.9" fill="none"/>
<path d="M864.8 974.6L508.8 373.0" stroke="#000080" stroke-width="0.9" fill="none"/>
<path d="M862.5 975.9L504.7 375.4" stroke="#000080" stroke-width="0.9" fill="none"/>
<path d="M860.3 977.2L500.7 377.7" stroke="#000080" stroke-width="0.9" fill="none"/>
<path d="M858.0 978.5L496.7 380.0" stroke="#000080" stroke-width="0.9" fill="none"/>
<path d="M855.8 979.8L492.8 382.3" stroke="#000080" stroke-width="0.9" fill="none"/>
<path d="M853.6 981.1L488.8 384.6" stroke="#000080" stroke-width="0.9" fill="none"/>
</g>
<path d="M556.0 432.0L560.5 432.5L565.0 433.0L567.6 427.8M560.5 432.5L566.0 425.0M566.0 425.0L567.6 427.8L569.2 430.6L591.4 414.4M567.6 427.8L590.0 412.0M590.0 412.0L591.4 414.4L592.8 416.9L641.9 384.2M591.4 414.4L640.0 381.0M640.0 381.0L641.9 384.2L643.7 387.4L703.0 346.2M641.9 384.2L700.0 341.0M700.0 341.0L703.0 346.2L706.0 351.3L719.4 335.8M703.0 346.2L716.0 330.0M716.0 330.0L719.4 335.8L722.7 341.6L744.5 318.7M719.4 335.8L740.0 311.0M740.0 311.0L744.5 318.7L749.0 326.5L766.7 300.6M744.5 318.7L760.0 289.0M760.0 289.0L766.7 300.6L773.5 312.3L789.7 285.2M766.7 300.6L782.0 272.0M782.0 272.0L789.7 285.2L797.3 298.5L813.0 270.9M789.7 285.2L805.0 257.0M805.0 257.0L813.0 270.9L821.0 284.7L827.0 269.5M813.0 270.9L830.0 256.0M830.0 256.0L827.0 269.5L824.0 283.0L834.9 278.8M827.0 269.5L845.0 273.0M845.0 273.0L834.9 278.8L824.9 284.6L851.4 306.1M834.9 278.8L862.0 300.0M862.0 300.0L851.4 306.1L840.8 312.2L866.4 332.1M851.4 306.1L877.0 326.0M877.0 326.0L866.4 332.1L855.7 338.2L881.5 356.6M866.4 332.1L893.0 350.0M893.0 350.0L881.5 356.6L870.1 363.2L898.2 380.0M881.5 356.6L912.0 372.0M912.0 372.0L898.2 380.0L884.3 387.9L904.7 395.1M898.2 380.0L917.0 388.0M917.0 388.0L904.7 395.1L892.5 402.1L909.8 408.8M904.7 395.1L920.0 403.0M920.0 403.0L909.8 408.8L899.7 414.7L937.9 460.2M909.8 408.8L947.0 455.0M947.0 455.0L937.9 460.2L928.9 465.4L967.3 514.4M937.9 460.2L975.0 510.0M975.0 510.0L967.3 514.4L959.6 518.9L998.7 565.4M967.3 514.4L1008.0 560.0M1008.0 560.0L998.7 565.4L989.4 570.7L1014.5 590.0M998.7 565.4L1025.0 584.0M1025.0 584.0L1014.5 590.0L1004.0 596.1L1031.8 618.5M1014.5 590.0L1043.0 612.0M1043.0 612.0L1031.8 618.5L1020.5 624.9L1046.5 643.6M1031.8 618.5L1058.0 637.0M1058.0 637.0L1046.5 643.6L1035.1 650.2L1063.8 674.4M1046.5 643.6L1075.0 668.0M1075.0 668.0L1063.8 674.4L1052.7 680.8L1080.3 704.1M1063.8 674.4L1091.0 698.0M1091.0 698.0L1080.3 704.1L1069.6 710.3L1092.5 721.2M1080.3 704.1L1105.0 714.0M1105.0 714.0L1092.5 721.2L1080.0 728.4L1104.7 740.6M1092.5 721.2L1118.0 733.0M1118.0 733.0L1104.7 740.6L1091.4 748.3L1108.0 754.5M1104.7 740.6L1123.0 758.0M1123.0 758.0L1108.0 754.5L1093.0 751.0L1098.5 765.0M1108.0 754.5L1106.0 778.0M1106.0 778.0L1098.5 765.0L1091.1 752.1L1074.5 774.4M1098.5 765.0L1080.0 784.0M1080.0 784.0L1074.5 774.4L1069.0 764.8L1043.9 788.8M1074.5 774.4L1048.0 796.0M1048.0 796.0L1043.9 788.8L1039.7 781.6L1016.8 802.4M1043.9 788.8L1020.0 808.0M1020.0 808.0L1016.8 802.4L1013.5 796.7L989.4 816.5M1016.8 802.4L992.0 821.0M992.0 821.0L989.4 816.5L986.9 812.1L962.3 830.1M989.4 816.5L964.0 833.0M964.0 833.0L962.3 830.1L960.6 827.1L935.2 843.6M962.3 830.1L936.0 845.0M936.0 845.0L935.2 843.6L934.4 842.2L909.7 857.0M935.2 843.6L910.0 857.5M910.0 857.5L909.7 857.0L909.5 856.6L888.4 872.3M909.7 857.0L890.0 875.0M890.0 875.0L888.4 872.3L886.9 869.6L865.1 888.9M888.4 872.3L868.0 894.0M868.0 894.0L865.1 888.9L862.1 883.8L840.2 907.6M865.1 888.9L845.0 916.0M845.0 916.0L840.2 907.6L835.3 899.2L832.0 908.0M840.2 907.6L830.0 916.0M830.0 916.0L832.0 908.0L834.0 900.0L825.1 900.9M832.0 908.0L818.0 905.0M818.0 905.0L825.1 900.9L832.2 896.8L808.4 875.1M825.1 900.9L800.0 880.0M800.0 880.0L808.4 875.1L816.9 870.3L791.2 849.1M808.4 875.1L781.0 855.0M781.0 855.0L791.2 849.1L801.3 843.3L775.6 825.3M791.2 849.1L764.0 832.0M764.0 832.0L775.6 825.3L787.1 818.7L759.8 800.6M775.6 825.3L747.0 808.0M747.0 808.0L759.8 800.6L772.5 793.3L743.7 775.1M759.8 800.6L730.0 783.0M730.0 783.0L743.7 775.1L757.5 767.2L727.7 749.5M743.7 775.1L713.0 758.0M713.0 758.0L727.7 749.5L742.4 741.0L712.7 723.5M727.7 749.5L698.0 732.0M698.0 732.0L712.7 723.5L727.5 715.0L698.6 698.6M712.7 723.5L684.0 707.0M684.0 707.0L698.6 698.6L713.2 690.2L685.5 675.7M698.6 698.6L671.0 684.0M671.0 684.0L685.5 675.7L700.0 667.3L672.2 651.8M685.5 675.7L658.0 660.0M658.0 660.0L672.2 651.8L686.3 643.7L658.6 624.7M672.2 651.8L646.0 632.0M646.0 632.0L658.6 624.7L671.2 617.5L642.1 595.0M658.6 624.7L630.0 602.0M630.0 602.0L642.1 595.0L654.3 588.0L627.6 568.3M642.1 595.0L616.0 575.0M616.0 575.0L627.6 568.3L639.1 561.7L614.3 544.5M627.6 568.3L603.0 551.0M603.0 551.0L614.3 544.5L625.5 538.0L598.8 514.4M614.3 544.5L589.0 520.0M589.0 520.0L598.8 514.4L608.6 508.7L593.9 499.0M598.8 514.4L587.0 503.0M587.0 503.0L593.9 499.0L600.8 495.1L587.3 483.9M593.9 499.0L582.0 487.0M582.0 487.0L587.3 483.9L592.6 480.9L574.0 457.7M587.3 483.9L570.0 460.0M570.0 460.0L574.0 457.7L577.9 455.4L560.5 432.5M574.0 457.7L556.0 432.0" stroke="#8a8a10" stroke-width="0.9" fill="none" opacity=".8"/>
</g>
<polygon points="556.0,432.0 566.0,425.0 590.0,412.0 640.0,381.0 700.0,341.0 716.0,330.0 740.0,311.0 760.0,289.0 782.0,272.0 805.0,257.0 830.0,256.0 845.0,273.0 862.0,300.0 877.0,326.0 893.0,350.0 912.0,372.0 917.0,388.0 920.0,403.0 947.0,455.0 975.0,510.0 1008.0,560.0 1025.0,584.0 1043.0,612.0 1058.0,637.0 1075.0,668.0 1091.0,698.0 1105.0,714.0 1118.0,733.0 1123.0,758.0 1106.0,778.0 1080.0,784.0 1048.0,796.0 1020.0,808.0 992.0,821.0 964.0,833.0 936.0,845.0 910.0,857.5 890.0,875.0 868.0,894.0 845.0,916.0 830.0,916.0 818.0,905.0 800.0,880.0 781.0,855.0 764.0,832.0 747.0,808.0 730.0,783.0 713.0,758.0 698.0,732.0 684.0,707.0 671.0,684.0 658.0,660.0 646.0,632.0 630.0,602.0 616.0,575.0 603.0,551.0 589.0,520.0 587.0,503.0 582.0,487.0 570.0,460.0" fill="none" stroke="#808000" stroke-width="1.2"/>
<polygon points="565.0,433.0 824.0,283.0 1093.0,751.0 834.0,900.0" fill="#008000" stroke="#808000" stroke-width="1.2"/>
<path d="M824.0 283.0L834.0 900.0" stroke="#808000" stroke-width="1.1"/>
<path d="M1140 223h1v3h-2v-2h1zM1186 230h1v3h-2v-2h1zM1111 237h1v3h-2v-2h1zM948 253h1v3h-2v-2h1zM1176 259h1v3h-2v-2h1zM1184 255h1v3h-2v-2h1zM1199 258h1v3h-2v-2h1zM1050 265h1v3h-2v-2h1zM911 274h1v3h-2v-2h1zM924 280h1v3h-2v-2h1zM975 273h1v3h-2v-2h1zM1045 278h1v3h-2v-2h1zM1154 286h1v3h-2v-2h1zM1194 290h1v3h-2v-2h1zM1203 288h1v3h-2v-2h1zM1216 286h1v3h-2v-2h1zM1232 285h1v3h-2v-2h1zM1092 294h1v3h-2v-2h1zM924 298h1v3h-2v-2h1zM1033 299h1v3h-2v-2h1zM979 305h1v3h-2v-2h1zM925 311h1v3h-2v-2h1zM1245 307h1v3h-2v-2h1zM1244 311h1v3h-2v-2h1zM1086 315h1v3h-2v-2h1zM1353 317h1v3h-2v-2h1zM1410 319h1v3h-2v-2h1zM1195 320h1v3h-2v-2h1zM1204 324h1v3h-2v-2h1zM1228 321h1v3h-2v-2h1zM1301 325h1v3h-2v-2h1zM1147 328h1v3h-2v-2h1zM1219 329h1v3h-2v-2h1zM926 330h1v3h-2v-2h1zM1188 335h1v3h-2v-2h1zM1192 342h1v3h-2v-2h1zM1222 342h1v3h-2v-2h1zM1021 343h1v3h-2v-2h1zM929 346h1v3h-2v-2h1zM1245 348h1v3h-2v-2h1zM1261 354h1v3h-2v-2h1zM983 355h1v3h-2v-2h1zM1211 358h1v3h-2v-2h1zM1300 358h1v3h-2v-2h1zM938 359h1v3h-2v-2h1zM1207 366h1v3h-2v-2h1zM1145 369h1v3h-2v-2h1zM943 378h1v3h-2v-2h1zM1121 378h1v3h-2v-2h1zM1147 379h1v3h-2v-2h1zM1064 385h1v3h-2v-2h1zM1103 387h1v3h-2v-2h1zM1109 385h1v3h-2v-2h1zM1147 388h1v3h-2v-2h1zM1301 398h1v3h-2v-2h1zM1195 405h1v3h-2v-2h1zM1244 424h1v3h-2v-2h1zM1379 438h1v3h-2v-2h1zM1067 459h1v3h-2v-2h1zM1264 485h1v3h-2v-2h1zM1494 221h1v3h-2v-2h1zM1494 228h1v3h-2v-2h1zM1517 225h1v3h-2v-2h1zM1517 230h1v3h-2v-2h1zM1495 258h1v3h-2v-2h1zM1513 260h1v3h-2v-2h1zM1466 289h1v3h-2v-2h1zM1528 295h1v3h-2v-2h1zM1466 299h1v3h-2v-2h1zM1469 307h1v3h-2v-2h1zM1424 310h1v3h-2v-2h1zM1434 314h1v3h-2v-2h1zM1440 317h1v3h-2v-2h1zM1444 319h1v3h-2v-2h1zM1455 323h1v3h-2v-2h1zM1450 328h1v3h-2v-2h1zM1529 319h1v3h-2v-2h1zM1479 332h1v3h-2v-2h1zM1486 338h1v3h-2v-2h1zM1502 342h1v3h-2v-2h1zM1529 343h1v3h-2v-2h1zM1431 358h1v3h-2v-2h1zM1533 366h1v3h-2v-2h1zM1458 369h1v3h-2v-2h1zM1464 370h1v3h-2v-2h1zM1476 372h1v3h-2v-2h1zM1484 375h1v3h-2v-2h1zM1499 377h1v3h-2v-2h1zM1436 399h1v3h-2v-2h1zM1452 412h1v3h-2v-2h1zM1459 413h1v3h-2v-2h1zM1479 422h1v3h-2v-2h1zM1495 423h1v3h-2v-2h1zM1470 432h1v3h-2v-2h1zM1438 457h1v3h-2v-2h1zM1446 457h1v3h-2v-2h1zM1614 293h1v3h-2v-2h1zM1653 289h1v3h-2v-2h1zM1710 287h1v3h-2v-2h1zM1724 289h1v3h-2v-2h1zM1614 314h1v3h-2v-2h1zM1653 315h1v3h-2v-2h1zM1665 317h1v3h-2v-2h1zM1689 326h1v3h-2v-2h1zM1689 330h1v3h-2v-2h1zM1667 332h1v3h-2v-2h1zM1653 335h1v3h-2v-2h1zM1613 348h1v3h-2v-2h1zM1710 353h1v3h-2v-2h1zM1613 363h1v3h-2v-2h1zM1653 367h1v3h-2v-2h1zM1159 525h1v3h-2v-2h1zM1389 518h1v3h-2v-2h1zM1425 522h1v3h-2v-2h1zM1470 508h1v3h-2v-2h1zM1486 505h1v3h-2v-2h1zM1724 524h1v3h-2v-2h1zM1233 582h1v3h-2v-2h1zM1412 610h1v3h-2v-2h1zM1372 623h1v3h-2v-2h1zM1465 638h1v3h-2v-2h1zM1483 639h1v3h-2v-2h1zM1347 650h1v3h-2v-2h1zM1457 675h1v3h-2v-2h1zM1475 679h1v3h-2v-2h1zM1109 687h1v3h-2v-2h1zM1360 695h1v3h-2v-2h1zM1443 705h1v3h-2v-2h1zM1405 713h1v3h-2v-2h1zM1457 715h1v3h-2v-2h1zM1704 702h1v3h-2v-2h1zM1737 679h1v3h-2v-2h1zM1744 687h1v3h-2v-2h1zM1759 714h1v3h-2v-2h1zM1198 724h1v3h-2v-2h1zM1291 733h1v3h-2v-2h1zM1779 743h1v3h-2v-2h1zM1415 749h1v3h-2v-2h1zM1428 759h1v3h-2v-2h1zM1542 766h1v3h-2v-2h1zM1547 770h1v3h-2v-2h1zM1619 769h1v3h-2v-2h1zM1737 779h1v3h-2v-2h1zM1333 789h1v3h-2v-2h1zM1638 800h1v3h-2v-2h1zM1705 802h1v3h-2v-2h1zM1360 813h1v3h-2v-2h1zM1374 823h1v3h-2v-2h1zM1489 811h1v3h-2v-2h1zM1492 815h1v3h-2v-2h1zM1495 819h1v3h-2v-2h1zM1483 827h1v3h-2v-2h1zM1656 827h1v3h-2v-2h1zM1320 846h1v3h-2v-2h1zM1440 846h1v3h-2v-2h1zM1476 844h1v3h-2v-2h1zM1156 858h1v3h-2v-2h1zM1440 860h1v3h-2v-2h1zM1492 858h1v3h-2v-2h1zM1424 884h1v3h-2v-2h1zM1426 889h1v3h-2v-2h1zM1513 885h1v3h-2v-2h1zM1235 894h1v3h-2v-2h1zM1286 899h1v3h-2v-2h1zM1300 909h1v3h-2v-2h1zM1340 905h1v3h-2v-2h1zM1343 909h1v3h-2v-2h1zM1354 912h1v3h-2v-2h1zM1281 918h1v3h-2v-2h1zM1534 914h1v3h-2v-2h1zM1380 935h1v3h-2v-2h1zM1325 948h1v3h-2v-2h1zM745 356h1v3h-2v-2h1zM749 363h1v3h-2v-2h1zM752 373h1v3h-2v-2h1zM760 424h1v3h-2v-2h1zM763 433h1v3h-2v-2h1zM654 471h1v3h-2v-2h1zM783 313h1v3h-2v-2h1zM867 380h1v3h-2v-2h1zM869 388h1v3h-2v-2h1zM870 399h1v3h-2v-2h1zM872 414h1v3h-2v-2h1zM924 498h1v3h-2v-2h1zM811 532h1v3h-2v-2h1zM748 549h1v3h-2v-2h1zM712 561h1v3h-2v-2h1zM883 558h1v3h-2v-2h1zM972 561h1v3h-2v-2h1zM554 240h1v3h-2v-2h1zM669 243h1v3h-2v-2h1zM766 240h1v3h-2v-2h1zM844 245h1v3h-2v-2h1zM539 311h1v3h-2v-2h1zM652 316h1v3h-2v-2h1zM503 395h1v3h-2v-2h1zM495 437h1v3h-2v-2h1zM493 512h1v3h-2v-2h1zM504 578h1v3h-2v-2h1zM1066 561h1v3h-2v-2h1zM779 630h1v3h-2v-2h1zM713 658h1v3h-2v-2h1zM811 664h1v3h-2v-2h1zM938 680h1v3h-2v-2h1zM1021 693h1v3h-2v-2h1zM836 803h1v3h-2v-2h1zM959 818h1v3h-2v-2h1zM614 664h1v3h-2v-2h1zM586 704h1v3h-2v-2h1zM517 745h1v3h-2v-2h1zM507 763h1v3h-2v-2h1zM694 783h1v3h-2v-2h1zM565 885h1v3h-2v-2h1zM707 908h1v3h-2v-2h1zM817 921h1v3h-2v-2h1zM943 934h1v3h-2v-2h1zM1075 798h1v3h-2v-2h1zM1066 810h1v3h-2v-2h1zM1030 944h1v3h-2v-2h1z" fill="#ff0000"/>
</svg>
<div class="abs" id="tbbg"></div><div class="abs" id="tb"></div>
<div class="ti" style="left:17px;background:none"><svg width="30" height="30" viewBox="0 0 30 30" style="left:0;top:0"><circle cx="7.600" cy="6.600" r="3.700" fill="none" stroke="#a0a0a0" stroke-width="1.300"/><circle cx="7.600" cy="21.500" r="3.700" fill="none" stroke="#a0a0a0" stroke-width="1.300"/><path d="M10.500 9.500L25.400 24.900M10.500 18.600L17 13" stroke="#a0a0a0" stroke-width="2" stroke-linecap="round"/><path d="M18.500 11.500L25.400 6" stroke="#a0a0a0" stroke-width="2.800" stroke-linecap="round"/></svg></div>
<div class="ti" style="left:54px;background:none"><svg width="30" height="30" viewBox="0 0 30 30" style="left:0;top:0"><rect x="2.100" y="2.200" width="15" height="14.800" fill="#a0a0a0"/><rect x="13.600" y="12" width="13.200" height="16" fill="#a0a0a0"/></svg></div>
<div class="ti" style="left:91px;background:none"><svg width="30" height="30" viewBox="0 0 30 30" style="left:0;top:0"><rect x="0" y="0" width="1" height="1" fill="#333"/><rect x="1.600" y="4" width="27.400" height="24" fill="#a0a0a0"/><rect x="11" y="1.200" width="10.300" height="4.300" fill="#e8e8e8" stroke="#b0b0b0" stroke-width=".8"/></svg></div>
<div class="tsep" style="left:129.25px"></div>
<div class="ti" style="left:138.5px;"><svg width="30" height="30" viewBox="0 0 30 30" style="left:0;top:0"><rect x="0" y="0" width="1" height="1" fill="#333"/><rect x="7.800" y="2.400" width="19.100" height="24.500" fill="#00ffff" stroke="#000" stroke-width="1.300"/><rect x="1.600" y="6.500" width="15.100" height="12.500" fill="#00ffff" fill-opacity=".9" stroke="#000" stroke-width="1.300"/></svg></div>
<div class="ti" style="left:176px;"><svg width="30" height="30" viewBox="0 0 30 30" style="left:0;top:0"><rect x="0" y="0" width="1" height="1" fill="#333"/><path d="M14.400 2.600l8.100 7.900-8.100 7.500-7.800-7.500z" fill="#00ffff" stroke="#000" stroke-width="1.200"/><path d="M14.400 11l8.100 7.100-8.100 7.400-7.800-7.400z" fill="#00ffff" stroke="#000" stroke-width="1.200"/></svg></div>
<div class="tsep" style="left:214.25px"></div>
<div class="ti" style="left:223.5px;"><svg width="30" height="30" viewBox="0 0 30 30" style="left:0;top:0"><rect x="0" y="0" width="1" height="1" fill="#333"/><text x="9.500" y="16.200" font-family="Liberation Sans,sans-serif" font-size="18.500" fill="#000">J</text><path d="M1.400 20.600H26M22 17l4 3.600-4 3.600" fill="none" stroke="#000" stroke-width="1.200"/><path d="M-0.4 20.6l1.9 -1.9 1.9 1.9 -1.9 1.9 z" fill="#ff0000"/><path d="M26.1 20.6l1.9 -1.9 1.9 1.9 -1.9 1.9 z" fill="#ff0000"/></svg></div>
<div class="ti" style="left:261px;"><svg width="30" height="30" viewBox="0 0 30 30" style="left:0;top:0"><rect x="0" y="0" width="1" height="1" fill="#333"/><path d="M6.500 26.700c-.5-2.500.8-3.700 2.300-5.200 2.200-2.200 4.700-3 6.900-5.100 2.500-2.400 5-4.600 6.900-7.500 1.500-2.200 2.400-4 3.400-6.300" fill="none" stroke="#000" stroke-width="1.700"/><path d="M17.5 5.3l1.9 -1.9 1.9 1.9 -1.9 1.9 z" fill="#ff0000"/><path d="M20.1 17.9l1.9 -1.9 1.9 1.9 -1.9 1.9 z" fill="#ff0000"/><path d="M2.3 20.6l1.9 -1.9 1.9 1.9 -1.9 1.9 z" fill="#ff0000"/></svg></div>
<div class="tsep" style="left:299.25px"></div>
<div class="ti" style="left:308.5px;"><svg width="30" height="30" viewBox="0 0 30 30" style="left:0;top:0"><rect x="0" y="0" width="1" height="1" fill="#333"/><path d="M2.900 25.200L21.800 6.600M14.300 6.400H22v7.100" fill="none" stroke="#000" stroke-width="1.250"/><path d="M1 25.2l1.9 -1.9 1.9 1.9 -1.9 1.9 z" fill="#ff0000"/></svg></div>
<div class="ti" style="left:346px;"><svg width="30" height="30" viewBox="0 0 30 30" style="left:0;top:0"><rect x="0" y="0" width="1" height="1" fill="#333"/><path d="M2.900 25.200H18.400A15.500 15.500 0 0 0 13.900 14.200z" fill="#00ffff" stroke="#000" stroke-width="1.250"/><path d="M2.900 25.200L22.300 6.400M14.800 6.400h7.500v7.100M2.900 25.200H21.200" fill="none" stroke="#000" stroke-width="1.250"/><path d="M1 25.2l1.9 -1.9 1.9 1.9 -1.9 1.9 z" fill="#ff0000"/></svg></div>
<div class="ti" style="left:383.5px;"><svg width="30" height="30" viewBox="0 0 30 30" style="left:0;top:0"><rect x="0" y="0" width="1" height="1" fill="#333"/><path d="M3 26.700L24.400 5.300M17.500 6.100L25 5.600 24.700 13" fill="none" stroke="#000" stroke-width="1.250"/><path d="M1.1 26.7l1.9 -1.9 1.9 1.9 -1.9 1.9 z" fill="#ff0000"/><path d="M22.8 5.2l1.9 -1.9 1.9 1.9 -1.9 1.9 z" fill="#ff0000"/></svg></div>
<div class="tsep" style="left:421.75px"></div>
<div class="ti" style="left:431px;"><svg width="30" height="30" viewBox="0 0 30 30" style="left:0;top:0"><rect x="0" y="0" width="1" height="1" fill="#333"/><path d="M12 16.600L24.400 4.100M12 16.600L23.300 27M12 16.600L3.400 7.800M12 16.600L4 24M7.600 7.800H3.400v4.200M4 20v4h4.200" fill="none" stroke="#000" stroke-width="1.150"/><rect x="10.200" y="14.800" width="3.800" height="3.800" fill="#008080"/><path d="M22.5 4.1l1.9 -1.9 1.9 1.9 -1.9 1.9 z" fill="#ff0000"/><path d="M21.4 27l1.9 -1.9 1.9 1.9 -1.9 1.9 z" fill="#ff0000"/></svg></div>
<div class="ti" style="left:468.5px;"><svg width="30" height="30" viewBox="0 0 30 30" style="left:0;top:0"><rect x="0" y="0" width="1" height="1" fill="#333"/><circle cx="20.300" cy="17.500" r="8.200" fill="#00ffff" stroke="#000" stroke-width="1.200"/><circle cx="11.100" cy="11.200" r="6.300" fill="#00ffff" stroke="#000" stroke-width="1.200"/><path d="M16 6.800A8.200 8.200 0 0 0 11.500 17.400" fill="none" stroke="#000" stroke-width="1"/><path d="M15 9L11.400 14.800" stroke="#000" stroke-width="1"/><path d="M3.5 6.4l1.9 -1.9 1.9 1.9 -1.9 1.9 z" fill="#ff0000"/><path d="M25 24.4l1.9 -1.9 1.9 1.9 -1.9 1.9 z" fill="#ff0000"/></svg></div>
<div class="ti" style="left:506px;"><svg width="30" height="30" viewBox="0 0 30 30" style="left:0;top:0"><rect x="0" y="0" width="1" height="1" fill="#333"/><circle cx="15.500" cy="15.800" r="10.300" fill="#00ffff" stroke="#000" stroke-width="1.250"/><path d="M5.700 27.800L28 3.200M22.300 3H28.300V8.900" fill="none" stroke="#000" stroke-width="1.250"/><path d="M3.8 27.8l1.9 -1.9 1.9 1.9 -1.9 1.9 z" fill="#ff0000"/></svg></div>
<div class="tsep" style="left:544.25px"></div>
<div class="ti" style="left:553.5px;"><svg width="30" height="30" viewBox="0 0 30 30" style="left:0;top:0"><rect x="0" y="0" width="1" height="1" fill="#333"/><path d="M5.200 4.600L17 5.300c3.500 1 5.500 3 6 6l1.200 8.900.8.800v3h-5.200l-8-1.300H5.200z" fill="#00ffff" stroke="#000" stroke-width="1.400" stroke-linejoin="round"/><path d="M5.200 19.800L22.100 6.600" stroke="#000" stroke-width="1.300"/></svg></div>
<div class="ti" style="left:591px;"><svg width="30" height="30" viewBox="0 0 30 30" style="left:0;top:0"><rect x="0" y="0" width="1" height="1" fill="#333"/><path d="M6.600 4.900L26.100 10.700 8.900 25z" fill="#00ffff" stroke="#000" stroke-width="1.300" stroke-linejoin="round"/><path d="M3.800 24.400L24.400 2.300" stroke="#ff0000" stroke-width="1"/></svg></div>
<div class="ti" style="left:628.5px;"><svg width="30" height="30" viewBox="0 0 30 30" style="left:0;top:0"><rect x="0" y="0" width="1" height="1" fill="#333"/><path d="M2.500 18.700C3 15 3.500 13.500 5.400 12.400 8 10.800 11 10.200 14 8.900c2.500-1 5.500-1.300 7.400-2.800 1.700-1.300 3-2.600 4-4.300M6.500 24.400c1.500-3 3-5.500 5.200-6.900 2.500-1.500 5.500-2 8-3.400 2.200-1.200 4-2.400 5.700-4 1.200-1.100 2.200-2.100 2.900-3.500M14 27.800c.5-2 1.300-3.500 2.800-4.500 1.700-1.100 3.700-1.200 5.200-2.300 1.300-1 2-2.200 2.900-3.500.6-.9 1.200-1.500 1.700-2.300" fill="none" stroke="#000" stroke-width="1.700" stroke-linecap="round"/></svg></div>
<div class="ti" style="left:666px;"><svg width="30" height="30" viewBox="0 0 30 30" style="left:0;top:0"><rect x="0" y="0" width="1" height="1" fill="#333"/><path d="M1.900 16.400C3.500 14.500 5 12.500 7.100 11.800c3.500-.8 7.500-.2 10.900-.6 2-.3 4-.7 5.700-1.700 1-.7 1.800-1.800 2.300-2.900M1.700 25c1.600-1.900 3.200-3.900 5.400-4.600 3.500-.8 7.500-.2 10.900-.6 2-.3 4-.7 5.700-1.700 1.300-.8 2.300-1.800 3.200-2.900" fill="none" stroke="#000" stroke-width="1.700" stroke-linecap="round"/><path d="M16.800 3.800L14.600 25.600" stroke="#ff0000" stroke-width="1.200"/></svg></div>
<div class="ti" style="left:703.5px;"><svg width="30" height="30" viewBox="0 0 30 30" style="left:0;top:0"><rect x="0" y="0" width="1" height="1" fill="#333"/><path d="M1.400 15.200L3.700 12.600H10.500L16.800 16.400 26.600 10.100 27.200 24.400 23.700 21.500 19.100 23.300H1.400z" fill="#00ffff"/><path d="M1.400 15.200L3.700 12.600H10.500L16.800 16.400 26.600 10.100M27.200 24.400L23.700 21.500 19.100 23.300H1.400" fill="none" stroke="#000" stroke-width="1.700" stroke-linejoin="round"/></svg></div>
<div class="tsep" style="left:741.75px"></div>
<div class="ti" style="left:751px;"><svg width="30" height="30" viewBox="0 0 30 30" style="left:0;top:0"><rect x="0" y="0" width="1" height="1" fill="#333"/><path d="M7.9 5.800l1.300-2 1.300 2v18.300l-1.300 2.200-1.300-2.200z" fill="#909090" stroke="#000" stroke-width=".9"/><path d="M19.2 5.800l1.300-2 1.300 2v18.300l-1.300 2.200-1.300-2.200z" fill="#909090" stroke="#000" stroke-width=".9"/><rect x="4.9" y="17.500" width="8.400" height="4.500" fill="none" stroke="#ff0000" stroke-width="1.200"/><rect x="16.3" y="8.700" width="8.400" height="4.500" fill="none" stroke="#ff0000" stroke-width="1.200"/></svg></div>
<div class="ti" style="left:788.5px;"><svg width="30" height="30" viewBox="0 0 30 30" style="left:0;top:0"><rect x="0" y="0" width="1" height="1" fill="#333"/><path d="M7.9 5.800l1.300-2 1.300 2v18.300l-1.300 2.200-1.300-2.200z" fill="#909090" stroke="#000" stroke-width=".9"/><path d="M19.2 5.800l1.300-2 1.300 2v18.300l-1.300 2.200-1.300-2.200z" fill="#909090" stroke="#000" stroke-width=".9"/><rect x="4.9" y="17.500" width="8.400" height="4.500" fill="none" stroke="#ff0000" stroke-width="1.200"/><rect x="16.3" y="8.700" width="8.400" height="4.500" fill="none" stroke="#ff0000" stroke-width="1.200"/></svg></div>
<div class="tsep" style="left:826.75px"></div>
<div class="ti" style="left:836px;"><svg width="30" height="30" viewBox="0 0 30 30" style="left:0;top:0"><rect x="0" y="0" width="1" height="1" fill="#333"/><path d="M3.100 8.400V26.700H28.600" fill="none" stroke="#000" stroke-width="1.500"/><path d="M7.100 19L15.400 17 18.800 14.700 27.200 13" fill="none" stroke="#000" stroke-width="1.400"/><path d="M5 19.3l1.9 -1.9 1.9 1.9 -1.9 1.9 z" fill="#ff0000"/><path d="M13.8 16.4l1.9 -1.9 1.9 1.9 -1.9 1.9 z" fill="#ff0000"/><path d="M25.3 13l1.9 -1.9 1.9 1.9 -1.9 1.9 z" fill="#ff0000"/></svg></div>
<div class="ti" style="left:873.5px;"><svg width="30" height="30" viewBox="0 0 30 30" style="left:0;top:0"><rect x="0" y="0" width="1" height="1" fill="#333"/><path d="M9.400 17.900H22.600" stroke="#000" stroke-width="1.300"/><path d="M15.100 11.200V24.400M1.900 10.100L9.400 17.900 1.900 25.600M29.800 10.100L22.600 17.900 29.800 25.600" fill="none" stroke="#ff0000" stroke-width="1.200"/></svg></div>
<div class="tsep" style="left:911.75px"></div>
<div class="ti" style="left:921px;"><svg width="30" height="30" viewBox="0 0 30 30" style="left:0;top:0"><rect x="0" y="0" width="1" height="1" fill="#333"/><path d="M7.9 5.800l1.300-2 1.300 2v18.300l-1.300 2.200-1.300-2.200z" fill="#909090" stroke="#000" stroke-width=".9"/><path d="M19.2 5.800l1.300-2 1.300 2v18.300l-1.300 2.200-1.300-2.200z" fill="#909090" stroke="#000" stroke-width=".9"/><rect x="4.9" y="17.500" width="8.400" height="4.500" fill="none" stroke="#ff0000" stroke-width="1.200"/><rect x="16.3" y="8.700" width="8.400" height="4.500" fill="none" stroke="#ff0000" stroke-width="1.200"/></svg></div>
<div class="ti" style="left:958.5px;"><svg width="30" height="30" viewBox="0 0 30 30" style="left:0;top:0"><rect x="0" y="0" width="1" height="1" fill="#333"/><path d="M7.9 5.800l1.300-2 1.300 2v18.300l-1.300 2.200-1.300-2.200z" fill="#909090" stroke="#000" stroke-width=".9"/><path d="M19.2 5.800l1.300-2 1.300 2v18.300l-1.300 2.200-1.300-2.200z" fill="#909090" stroke="#000" stroke-width=".9"/><rect x="4.9" y="17.500" width="8.400" height="4.500" fill="none" stroke="#ff0000" stroke-width="1.200"/><rect x="16.3" y="8.700" width="8.400" height="4.500" fill="none" stroke="#ff0000" stroke-width="1.200"/></svg></div>
<div class="ti" style="left:996px;"><svg width="30" height="30" viewBox="0 0 30 30" style="left:0;top:0"><rect x="0" y="0" width="1" height="1" fill="#333"/><path d="M7.9 5.800l1.300-2 1.300 2v18.300l-1.300 2.200-1.300-2.200z" fill="#909090" stroke="#000" stroke-width=".9"/><path d="M19.2 5.800l1.300-2 1.300 2v18.300l-1.300 2.200-1.300-2.200z" fill="#909090" stroke="#000" stroke-width=".9"/><rect x="4.9" y="17.500" width="8.400" height="4.500" fill="none" stroke="#ff0000" stroke-width="1.200"/><rect x="16.3" y="8.700" width="8.400" height="4.500" fill="none" stroke="#ff0000" stroke-width="1.200"/></svg></div>
<div class="tsep" style="left:1034.25px"></div>
<div class="ti" style="left:1043.5px;"><svg width="30" height="30" viewBox="0 0 30 30" style="left:0;top:0"><rect x="0" y="0" width="1" height="1" fill="#333"/><path d="M4 7.700L7.300 11.500 17 12.300 23.400 14.200 24.700 16.600M17 12.300L15.300 25.500 17.800 27.900H21" fill="none" stroke="#000" stroke-width="1.300" stroke-linejoin="round"/><path d="M20.2 21.8h4.8M22.6 19.4v4.8" stroke="#000" stroke-width="1.2" fill="none"/></svg></div>
<div class="tsep" style="left:1081.75px"></div>
<div class="ti" style="left:1091px;"><svg width="30" height="30" viewBox="0 0 30 30" style="left:0;top:0"><rect x="0" y="0" width="1" height="1" fill="#333"/><path d="M8.400 10.200H16.500L14.400 12.700 25.500 23.200 22.200 26.400 11.600 15.600 8.400 18.300z" fill="#00e8e8" stroke="#000" stroke-width="1.200" stroke-linejoin="round"/><path d="M2.1 6.6h4.6M4.4 4.3v4.6" stroke="#ff0000" stroke-width="1.2" fill="none"/></svg></div>
<div class="ti" style="left:1128.5px;"><svg width="30" height="30" viewBox="0 0 30 30" style="left:0;top:0"><rect x="0" y="0" width="1" height="1" fill="#333"/><path d="M1.500 8.500Q2 6.500 6 6.200L10 5.400H17l3 .8 5 .2c3 1 3.700 4 3.700 8 0 4-.5 7.500-3.500 9.500l-5 .3-3 1.200-3-1H3l-1.600-1.200z" fill="#00ffff" stroke="#000" stroke-width="1.300" stroke-linejoin="round"/><path d="M4.6 15.3h4.6M6.9 13v4.6" stroke="#ff0000" stroke-width="1.2" fill="none"/><path d="M19.7 19h4.6M22 16.7v4.6" stroke="#ff0000" stroke-width="1.2" fill="none"/></svg></div>
<div class="ti" style="left:1166px;"><svg width="30" height="30" viewBox="0 0 30 30" style="left:0;top:0"><rect x="0" y="0" width="1" height="1" fill="#333"/><path d="M6.500 7.700V20.700M0 9.400L6.500 14.200 0 19.500M23.400 7.700V20.700M29 8.200L23.400 14.200 29.500 19.900" fill="none" stroke="#000" stroke-width="1.250"/><path d="M7.9 11.8h4.6M10.2 9.5v4.6" stroke="#ff0000" stroke-width="1.4" fill="none"/><path d="M15.5 18.2h4.6M17.8 15.9v4.6" stroke="#ff0000" stroke-width="1.4" fill="none"/></svg></div>
<div class="ti" style="left:1203.5px;background:none"><svg width="30" height="30" viewBox="0 0 30 30" style="left:0;top:0"><rect x="0" y="0" width="1" height="1" fill="#999"/><path d="M1.900 10.200H15.700L27 25.500" fill="none" stroke="#a4a4a4" stroke-width="1.100"/><path d="M1.9 8.5l3.4 3.4M5.3 8.5l-3.4 3.4" stroke="#a4a4a4" stroke-width="1" fill="none"/><path d="M14 8.5l3.4 3.4M17.4 8.5l-3.4 3.4" stroke="#a4a4a4" stroke-width="1" fill="none"/><path d="M19.6 16.5l3.4 3.4M23 16.5l-3.4 3.4" stroke="#a4a4a4" stroke-width="1" fill="none"/><path d="M24.5 23l3.4 3.4M27.9 23l-3.4 3.4" stroke="#a4a4a4" stroke-width="1" fill="none"/></svg></div>
<div class="tsep" style="left:1241.75px"></div>
<div class="ti" style="left:1251px;"><svg width="30" height="30" viewBox="0 0 30 30" style="left:0;top:0"><rect x="0" y="0" width="1" height="1" fill="#333"/><path d="M4 7.700C6 8 7.300 8.500 8.100 9.400c1.500 2.500 2.500 6.500 4 8.800 1.200 1.800 3 3 4.900 3.600 2.500.8 5.500 1 8.800 1.300" fill="none" stroke="#000" stroke-width="1.500"/><path d="M26.600 5L14.500 17.400M14.500 12.500V17.400H19.500" fill="none" stroke="#ff0000" stroke-width="1.200"/></svg></div>
<div class="ti" style="left:1288.5px;"><svg width="30" height="30" viewBox="0 0 30 30" style="left:0;top:0"><rect x="0" y="0" width="1" height="1" fill="#333"/><path d="M6 6.100V21.500M.3 9.800L6 14.200 .3 19.900M22.900 6.100V21.500M29.400 8.600L23.400 14.700 29.400 20.700" fill="none" stroke="#ff0000" stroke-width="1.250"/><path d="M12.400 9.400L18.100 14.700 12.400 22.300" fill="none" stroke="#000" stroke-width="1.900"/></svg></div>
<svg style="left:4px;top:964px" width="6" height="32"><path d="M2 1v30" stroke="#9aa0ac" stroke-width="2" stroke-dasharray="2 2"/><path d="M3.500 2v30" stroke="#fff" stroke-width="1" stroke-dasharray="2 2"/></svg>
<div class="abs" id="status"></div>
<div class="st" style="left:11.500px;transform:scaleX(.975)">Finished Drawing</div>
<div class="abs" style="left:1185px;top:1001px;width:1px;height:29px;background:#8e929c;box-shadow:1px 0 0 #d4d7de"></div>
<div class="abs" style="left:1200px;top:1008px;width:98px;height:15px;box-sizing:border-box;border:1px solid #d8dce2;border-radius:2px;background:linear-gradient(#8fb649 0,#74a025 35%,#5f8a14 70%,#7fa838 100%)"></div>
<div class="abs" style="left:1307px;top:1003px;width:92px;height:27px;background:#ececec;border-left:1px solid #fff;border-top:1px solid #fff;box-sizing:border-box"></div>
<div class="st nm" style="left:1311px;color:#111;transform:scaleX(.87)">871</div>
<div class="st nm" style="left:1411px">E:8729.233</div>
<div class="st nm" style="left:1531px;transform:scaleX(.925)">N:7605.533</div>
<div class="st nm" style="left:1655px">223.370</div>
<div class="st" style="left:1764px">deg</div>
<div class="st" style="left:1842px">m</div>

</body></html>
